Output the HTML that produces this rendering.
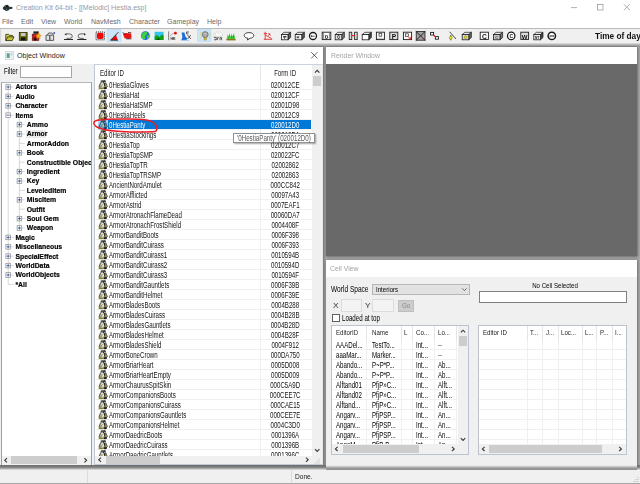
<!DOCTYPE html><html><head><meta charset="utf-8"><title>Creation Kit 64-bit - [[Melodic] Hestia.esp]</title><style>
*{box-sizing:border-box;margin:0;padding:0}
html,body{width:640px;height:484px;overflow:hidden;background:#ababab;font-family:"Liberation Sans",sans-serif;}
body{position:relative}
#root{position:absolute;left:0;top:0;width:640px;height:484px;filter:blur(0.3px)}
.a{position:absolute}
.t{position:absolute;white-space:nowrap;overflow:visible}
svg{position:absolute;overflow:visible}
.lv .t{-webkit-text-stroke:0}
</style></head><body><div id="root">
<div class="a" style="left:0;top:0;width:640px;height:28.3px;background:#fff"></div>
<svg style="left:0;top:0" width="16" height="14" viewBox="0 0 16 14"><path d="M2.9 7 L4.2 6.4 L5 5.2 L7.2 4.8 L8.6 5.6 L9.2 6.8 L12.4 7 L12.4 8.8 L9.4 9.2 L8.4 10.4 L6 10.9 L4.6 10 L3 9.2 Z" fill="#2b3337"/><path d="M4.6 6.8 L5.6 5.8 L6 6.6 Z M6.2 9 L7 9 L6.8 10.2 L6.2 10 Z" fill="#5f8890"/><ellipse cx="7" cy="6.4" rx="1" ry="0.6" fill="#0c0c0c"/></svg>
<div class="t" style="left:15.60px;top:2.50px;height:10px;line-height:10px;font-size:7.5px;color:#9a9aa0;transform:scale(0.943,1);transform-origin:0 50%;">Creation Kit 64-bit - [[Melodic] Hestia.esp]</div>
<svg style="left:565px;top:0" width="75" height="14" viewBox="0 0 75 14"><g stroke="#8f8f8f" stroke-width="0.7" fill="none"><path d="M6 7.6 H12"/><rect x="32.4" y="4.4" width="5.6" height="5.6"/><path d="M58.8 4.2 L64.8 10.2 M64.8 4.2 L58.8 10.2"/></g></svg>
<div class="t" style="left:2.40px;top:17.40px;height:10px;line-height:10px;font-size:7.4px;color:#6a6a6a;transform:scale(0.953,1);transform-origin:0 50%;">File</div>
<div class="t" style="left:21.20px;top:17.40px;height:10px;line-height:10px;font-size:7.4px;color:#6a6a6a;transform:scale(0.953,1);transform-origin:0 50%;">Edit</div>
<div class="t" style="left:41.00px;top:17.40px;height:10px;line-height:10px;font-size:7.4px;color:#6a6a6a;transform:scale(0.953,1);transform-origin:0 50%;">View</div>
<div class="t" style="left:64.30px;top:17.40px;height:10px;line-height:10px;font-size:7.4px;color:#6a6a6a;transform:scale(0.953,1);transform-origin:0 50%;">World</div>
<div class="t" style="left:91.20px;top:17.40px;height:10px;line-height:10px;font-size:7.4px;color:#6a6a6a;transform:scale(0.953,1);transform-origin:0 50%;">NavMesh</div>
<div class="t" style="left:128.80px;top:17.40px;height:10px;line-height:10px;font-size:7.4px;color:#6a6a6a;transform:scale(0.953,1);transform-origin:0 50%;">Character</div>
<div class="t" style="left:166.80px;top:17.40px;height:10px;line-height:10px;font-size:7.4px;color:#6a6a6a;transform:scale(0.953,1);transform-origin:0 50%;">Gameplay</div>
<div class="t" style="left:206.80px;top:17.40px;height:10px;line-height:10px;font-size:7.4px;color:#6a6a6a;transform:scale(0.953,1);transform-origin:0 50%;">Help</div>
<div class="a" style="left:0;top:28.3px;width:640px;height:15px;background:#f0f0f0;border-top:0.8px solid #b9b9b9"></div>
<div class="a" style="left:0;top:43.2px;width:640px;height:3.6px;background:linear-gradient(#e2e2e2,#b2b2b2 45%,#909090)"></div>
<svg style="left:0;top:28px;will-change:transform" width="640" height="16" viewBox="0 28 640 16" font-family="Liberation Sans, sans-serif" font-weight="bold">
<rect x="107" y="29.2" width="14" height="12.4" fill="#cce4f7" stroke="#a8d0f0" stroke-width="0.4"/>
<rect x="197.4" y="29" width="13.6" height="12.6" fill="#cce4f7" stroke="#a8d0f0" stroke-width="0.4"/>
<rect x="0" y="29" width="1.2" height="14" fill="#d8d8d8"/>
<path d="M5.8 40.6 V34.4 H8.6 L9.4 35.4 H12.4 V36.6" fill="#d8d86a" stroke="#2e2e00" stroke-width="0.85"/><path d="M5.8 40.6 L7.6 36.8 H14 L12.2 40.6 Z" fill="#c4c43c" stroke="#2e2e00" stroke-width="0.85"/>
<rect x="19.3" y="32.5" width="7.8" height="7.8" fill="#6e6e12" stroke="#2e2e00" stroke-width="0.8"/><rect x="20.9" y="33" width="4.6" height="3" fill="#c8c8c8"/><rect x="20.9" y="37.4" width="4.6" height="2.9" fill="#111"/>
<rect x="32.2" y="34.2" width="6.6" height="6.2" fill="#d41c1c" stroke="#5a0a0a" stroke-width="0.6"/><rect x="33.4" y="31.4" width="5.4" height="2.4" fill="#222"/><rect x="33.8" y="37.6" width="3" height="2.8" fill="#2a0a0a"/><path d="M38.6 32.6 L39.6 34.8 L41.4 35.4 L39.8 36.8 L40 39 L38.2 37.8 L36.4 38.6 L37 36.6 L35.8 35 L37.8 34.8 Z" fill="#f4b41c" stroke="#e46a10" stroke-width="0.4"/>
<path d="M46 35.2 H53.6 V40.4 H46 Z" fill="#e4e4e4" stroke="#4c4c4c" stroke-width="0.9"/><path d="M47.4 35 L48.6 33 H52 L53.4 35" fill="none" stroke="#4c4c4c" stroke-width="0.9"/><path d="M49.8 35.4 V40.2" stroke="#4c4c4c" stroke-width="1.2"/><rect x="53.6" y="32" width="1.2" height="2" fill="#2c3cc0"/>
<g fill="none" stroke="#4a4a4a" stroke-width="0.85"><path d="M66 33.9 H69.4 A2.9 2.25 0 0 1 69.4 38.4 H66.6"/><path d="M84.4 33.9 H81 A2.9 2.25 0 0 0 81 38.4 H83.8"/></g>
<path d="M64.4 34.6 L66.4 33 V35.6 Z M86 34.6 L84 33 V35.6 Z" fill="#333"/>
<path d="M64 39.5 H73 M77.2 39.5 H86.4" stroke="#1c1c1c" stroke-width="0.95"/>
<rect x="96" y="32" width="8.4" height="7.8" fill="none" stroke="#1c1c1c" stroke-width="0.9" stroke-dasharray="1.1 0.9"/><rect x="96.9" y="32.7" width="6.6" height="6.4" rx="1.8" fill="#f00808"/>
<path d="M111 40 L117.6 40 L116 34.8 Z" fill="#f00808"/><path d="M110.6 40.2 L118.4 32.2 M110.6 40.2 H118" stroke="#1c1c1c" stroke-width="0.9" fill="none"/>
<path d="M123 34 L126 33 L131 33.4 L131.6 37.4 L129 38.8 L124.6 38.2 Z" fill="#e81414"/><path d="M122.6 32.6 L125.6 34.4 M128 32.4 L131.4 33 M126 38.8 H131.6" stroke="#401010" stroke-width="0.8" fill="none"/>
<circle cx="145.4" cy="35.7" r="4.4" fill="#2468dc"/><path d="M141.6 34 L144 32 L146.8 31.8 L147.2 34.2 L145 36 L145.4 38.8 L143.4 39.4 L141.4 37.4 Z M146.8 35.8 L149.4 34.6 L149.4 37.6 L147.2 39.2 Z" fill="#3cd040"/>
<rect x="154.6" y="31.8" width="9" height="8.2" fill="#36c4ec"/><path d="M154.6 36.4 L157 35 L159.4 37 L162 34.6 L163.6 35.4 V40 H154.6 Z" fill="#12a018"/><path d="M156 40 L158.4 37.6 L160.4 40 Z" fill="#0a5a0e"/>
<path d="M168.6 31.4 V40.2" stroke="#666" stroke-width="0.8"/><path d="M170 36.4 Q171.4 33.2 174.2 33.4" stroke="#888" stroke-width="0.6" fill="none"/><circle cx="175.4" cy="33.2" r="1.4" fill="#e01010"/>
<text x="170.4" y="40" font-size="3.6" fill="#222">HK</text>
<path d="M181.6 32.4 H184.4 L185.4 36.6 L187.4 38.6 L186.4 40 H181.4 L182.4 37 Z" fill="#1c6cd4"/><path d="M181 40.4 H189" stroke="#9cc4ec" stroke-width="0.9"/><path d="M186.4 32 H189 M186.6 32 V34 H188.4 M187.6 35 L190.8 39 M190.8 35 L187.6 39" stroke="#222" stroke-width="0.7" fill="none"/>
<path d="M200 32.2 L201.6 33.4 M199.6 35 H201.2 M200 38 L201.6 36.8 M210.4 32.2 L208.8 33.4 M210.8 35 H209.2 M210.4 38 L208.8 36.8" stroke="#e4d020" stroke-width="0.7"/><circle cx="205.2" cy="34.6" r="3" fill="#a4a4a4" stroke="#5c5c5c" stroke-width="0.6"/><path d="M203.4 33.4 H207 M205.2 33.4 V36.6" stroke="#d4d4d4" stroke-width="0.6"/><rect x="204.1" y="37.6" width="2.2" height="2.4" fill="#d8c428" stroke="#6a5c00" stroke-width="0.35"/>
<path d="M213.6 36 Q213 33 215.6 33 Q216.4 31.4 218.4 32.4 Q220.4 31.2 221.4 33 Q222.8 33.6 222 36 Z" fill="#fff" stroke="#c4c4c4" stroke-width="0.5"/><path d="M214.6 33.6 L216 34.6 M218 33 L219.4 34.2" stroke="#aaa" stroke-width="0.5"/><path d="M213.8 37.4 H216.2 V40 M214 39.8 H216 M217.4 40.2 V37.6 H218.8 M220 40.2 V37.6 H221.6 V40.2" stroke="#222" stroke-width="0.7" fill="none"/>
<rect x="226.4" y="38.6" width="9.2" height="1.8" fill="#8a7418"/><path d="M227 38.8 L227.6 34 L228.6 37 L229.4 33 L230.6 36.8 L231.6 33.4 L232.6 37 L233.8 33 L235 38.8 Z" fill="#34d434"/><path d="M228.6 38.6 L229.4 35.6 M231.6 38.6 L232.2 35.8 M233.6 38.6 L234 35.4" stroke="#0c6c10" stroke-width="0.5"/>
<path d="M249 32.6 C252.2 32.6 253.8 34 253.8 35.4 C253.8 36.8 252.4 38 250.2 38.2 L247.4 40 L248 38.2 C245.6 38 244.2 36.8 244.2 35.4 C244.2 34 246 32.6 249 32.6 Z" fill="#fff" stroke="#1c1c1c" stroke-width="0.8"/>
<path d="M265.2 31.8 V39.4 M263.8 39.3 H272.2 M263.8 33.6 H267 M265.4 35 L271.6 38.6 M268.4 33 L270.6 35.6 M270 33.4 L268.4 35.6" stroke="#e01818" stroke-width="0.8" fill="none"/>
<path d="M281.4 34.599999999999994 L284.0 32.3 H290.59999999999997 L288.0 34.599999999999994 Z" fill="#e8e8e8" stroke="#1c1c1c" stroke-width="0.7"/><path d="M288.0 34.599999999999994 L290.59999999999997 32.3 V37.5 L288.0 39.8 Z" fill="#5a5a5a" stroke="#1c1c1c" stroke-width="0.7"/><rect x="281.4" y="34.599999999999994" width="6.6" height="5.2" fill="#f4f4f4" stroke="#1c1c1c" stroke-width="0.8"/><rect x="283" y="36.2" width="3.4" height="1.2" fill="#1c1c1c"/><path d="M284.6 37.4 V39" stroke="#1c1c1c" stroke-width="0.7"/>
<path d="M295.2 34.599999999999994 L297.8 32.3 H304.4 L301.8 34.599999999999994 Z" fill="#e8e8e8" stroke="#1c1c1c" stroke-width="0.7"/><path d="M301.8 34.599999999999994 L304.4 32.3 V37.5 L301.8 39.8 Z" fill="#5a5a5a" stroke="#1c1c1c" stroke-width="0.7"/><rect x="295.2" y="34.599999999999994" width="6.6" height="5.2" fill="#f4f4f4" stroke="#1c1c1c" stroke-width="0.8"/><rect x="296.6" y="36.4" width="2.6" height="1.8" fill="#555"/>
<circle cx="313" cy="36" r="3.5" fill="#fff" stroke="#1c1c1c" stroke-width="1.3"/><path d="M311.2 36.2 H314.8 M311.6 35 V37.2" stroke="#1c1c1c" stroke-width="0.7"/>
<rect x="322.2" y="32.2" width="8.6" height="7.4" fill="#fff" stroke="#1c1c1c" stroke-width="0.9"/><path d="M323.6 32.4 V39.4 M329.4 32.4 V39.4" stroke="#666" stroke-width="0.8"/><text x="326.5" y="38.5" font-size="6" fill="#111" text-anchor="middle">0</text>
<path d="M335.2 34.599999999999994 L337.8 32.3 H344.4 L341.8 34.599999999999994 Z" fill="#e8e8e8" stroke="#1c1c1c" stroke-width="0.7"/><path d="M341.8 34.599999999999994 L344.4 32.3 V37.5 L341.8 39.8 Z" fill="#777" stroke="#1c1c1c" stroke-width="0.7"/><rect x="335.2" y="34.599999999999994" width="6.6" height="5.2" fill="#e0e0e0" stroke="#1c1c1c" stroke-width="0.8"/><text x="338.5" y="39.2" font-size="4.6" fill="#111" text-anchor="middle">0</text>
<rect x="349.2" y="32.2" width="2.6" height="7.4" fill="#d8d8d8" stroke="#1c1c1c" stroke-width="0.8"/><rect x="354.6" y="32.2" width="2.6" height="7.4" fill="#d8d8d8" stroke="#1c1c1c" stroke-width="0.8"/><path d="M351.4 35.6 H355" stroke="#f01010" stroke-width="1.1"/>
<path d="M362.2 34.599999999999994 L364.8 32.3 H371.4 L368.8 34.599999999999994 Z" fill="#e8e8e8" stroke="#1c1c1c" stroke-width="0.7"/><path d="M368.8 34.599999999999994 L371.4 32.3 V37.5 L368.8 39.8 Z" fill="#444" stroke="#1c1c1c" stroke-width="0.7"/><rect x="362.2" y="34.599999999999994" width="6.6" height="5.2" fill="#fff" stroke="#1c1c1c" stroke-width="0.8"/>
<rect x="376.4" y="32.2" width="8" height="7.4" fill="#fff" stroke="#1c1c1c" stroke-width="0.9"/><rect x="379" y="33.6" width="2.8" height="2.6" fill="#eee" stroke="#1c1c1c" stroke-width="0.6"/><path d="M377 38.4 H383.8" stroke="#999" stroke-width="0.6"/>
<rect x="389.8" y="32.2" width="8" height="7.4" fill="#ddd" stroke="#1c1c1c" stroke-width="0.9"/><text x="394" y="38.8" font-size="6.6" fill="#111" text-anchor="middle">P</text>
<rect x="403.4" y="32.2" width="8.2" height="7.4" fill="#fff" stroke="#1c1c1c" stroke-width="0.9"/><rect x="405.4" y="33.8" width="3" height="2.8" fill="#eee" stroke="#1c1c1c" stroke-width="0.6"/><path d="M408 36.6 L410.4 38.8 M410.6 37 V39 H408.6" stroke="#e01010" stroke-width="0.8" fill="none"/>
<rect x="416.2" y="31.6" width="8.8" height="8.6" fill="#a0a0a0" stroke="#1c1c1c" stroke-width="0.8"/><path d="M415.8 31.2 L425.4 40.6 M425.4 31.2 L415.8 40.6" stroke="#1c1c1c" stroke-width="0.9"/><path d="M422.6 38 L424.2 39.4" stroke="#e01010" stroke-width="1"/>
<rect x="430.6" y="32.4" width="3" height="2.6" fill="#fff" stroke="#1c1c1c" stroke-width="0.9"/><rect x="435.4" y="36.6" width="3" height="2.6" fill="#fff" stroke="#1c1c1c" stroke-width="0.9"/><path d="M433.4 35 L436 37.4" stroke="#e01010" stroke-width="1.1"/>
<path d="M449.6 31.8 L456 39 M450.8 35 V40.4" stroke="#1c1c1c" stroke-width="0.8"/><circle cx="450.8" cy="37.8" r="1.5" fill="#e4e410" stroke="#6a6a00" stroke-width="0.4"/>
<path d="M462.2 34.599999999999994 L464.8 32.3 H471.4 L468.8 34.599999999999994 Z" fill="#e8e8e8" stroke="#1c1c1c" stroke-width="0.7"/><path d="M468.8 34.599999999999994 L471.4 32.3 V37.5 L468.8 39.8 Z" fill="#666" stroke="#1c1c1c" stroke-width="0.7"/><rect x="462.2" y="34.599999999999994" width="6.6" height="5.2" fill="#ddd" stroke="#1c1c1c" stroke-width="0.8"/><circle cx="465.6" cy="37.2" r="1.4" fill="#e4e410" stroke="#5a5a00" stroke-width="0.4"/>
<rect x="480.2" y="32.2" width="8.2" height="7.2" fill="#fff" stroke="#1c1c1c" stroke-width="0.9"/><text x="484.4" y="38.7" font-size="6.6" fill="#111" text-anchor="middle">C</text>
<path d="M493.4 34.599999999999994 L496.0 32.3 H502.59999999999997 L500.0 34.599999999999994 Z" fill="#e8e8e8" stroke="#1c1c1c" stroke-width="0.7"/><path d="M500.0 34.599999999999994 L502.59999999999997 32.3 V37.5 L500.0 39.8 Z" fill="#777" stroke="#1c1c1c" stroke-width="0.7"/><rect x="493.4" y="34.599999999999994" width="6.6" height="5.2" fill="#c8c8c8" stroke="#1c1c1c" stroke-width="0.8"/><text x="496.7" y="39.2" font-size="4.2" fill="#444" text-anchor="middle">C</text>
<circle cx="511.2" cy="35.9" r="3.7" fill="#fff" stroke="#1c1c1c" stroke-width="1.25"/><text x="511.2" y="37.7" font-size="5" fill="#111" text-anchor="middle">C</text>
<rect x="520.8" y="32.2" width="7.8" height="7.2" fill="#ddd" stroke="#1c1c1c" stroke-width="0.9"/><text x="524.7" y="38.6" font-size="6" fill="#111" text-anchor="middle">W</text>
<path d="M533.8 34.599999999999994 L536.4 32.3 H543.0 L540.4 34.599999999999994 Z" fill="#e8e8e8" stroke="#1c1c1c" stroke-width="0.7"/><path d="M540.4 34.599999999999994 L543.0 32.3 V37.5 L540.4 39.8 Z" fill="#444" stroke="#1c1c1c" stroke-width="0.7"/><rect x="533.8" y="34.599999999999994" width="6.6" height="5.2" fill="#eee" stroke="#1c1c1c" stroke-width="0.8"/><text x="537.1" y="39.2" font-size="3.2" fill="#111" text-anchor="middle">NT</text>
<circle cx="551.8" cy="35.9" r="3.7" fill="#fff" stroke="#1c1c1c" stroke-width="1.5"/><text x="551.8" y="37.1" font-size="3.4" fill="#111" text-anchor="middle">pw</text>
</svg>
<div class="t" style="left:595.30px;top:31.40px;height:10px;line-height:10px;font-size:8.3px;color:#111;font-weight:bold;transform:scale(0.997,1);transform-origin:0 50%;">Time of day</div>
<!--BAND-->
<div class="a" style="left:0;top:469.6px;width:640px;height:14.4px;background:#f0f0f0;border-bottom:1px solid #a6a6a6"></div>
<div class="a" style="left:86.6px;top:470px;width:0.6px;height:12.5px;background:#dcdcdc"></div>
<div class="a" style="left:291.4px;top:470px;width:0.6px;height:12.5px;background:#dcdcdc"></div>
<div class="t" style="left:295.00px;top:472.00px;height:10px;line-height:10px;font-size:6.6px;color:#222;transform:scale(0.997,1);transform-origin:0 50%;">Done.</div>
<svg style="left:632px;top:476px" width="8" height="8" viewBox="0 0 8 8"><g fill="#b8b8b8"><rect x="5.6" y="1" width="1" height="1"/><rect x="5.6" y="3" width="1" height="1"/><rect x="5.6" y="5" width="1" height="1"/><rect x="3.6" y="3" width="1" height="1"/><rect x="3.6" y="5" width="1" height="1"/><rect x="1.6" y="5" width="1" height="1"/></g></svg>
<div class="a" style="left:325.8px;top:46.8px;width:311px;height:208.8px;background:#696969;box-shadow:0 0 2.5px 0.5px rgba(0,0,0,.38)"><div class="a" style="left:0;top:0;width:311px;height:17.4px;background:#fff"></div></div>
<div class="t" style="left:330.60px;top:50.60px;height:10px;line-height:10px;font-size:6.9px;color:#a3a3a3;transform:scale(0.997,1);transform-origin:0 50%;">Render Window</div>
<div class="a" style="left:325.8px;top:259.7px;width:311px;height:206.3px;background:#f0f0f0;box-shadow:0 0 2.5px 0.5px rgba(0,0,0,.38)"><div class="a" style="left:0;top:0;width:311px;height:17.6px;background:#fff"></div></div>
<div class="t" style="left:330.40px;top:263.60px;height:10px;line-height:10px;font-size:6.9px;color:#a3a3a3;transform:scale(0.997,1);transform-origin:0 50%;">Cell View</div>
<div class="t" style="left:331.30px;top:284.30px;height:10px;line-height:10px;font-size:8.4px;color:#000;transform:scale(0.785,1);transform-origin:0 50%;">World Space</div>
<div class="a" style="left:372.2px;top:283.6px;width:97.8px;height:11.8px;background:#e2e2e2;border:0.7px solid #b6b6b6"></div>
<div class="t" style="left:376.00px;top:284.90px;height:10px;line-height:10px;font-size:7.4px;color:#000;transform:scale(0.83,1);transform-origin:0 50%;">Interiors</div>
<svg style="left:460px;top:285px" width="9" height="9" viewBox="0 0 9 9"><path d="M2.2 3.4 L4.4 5.6 L6.6 3.4" stroke="#444" stroke-width="0.75" fill="none"/></svg>
<div class="t" style="left:333.10px;top:300.90px;height:10px;line-height:10px;font-size:7.8px;color:#333;transform:scale(1.08,1);transform-origin:0 50%;">X</div>
<div class="a" style="left:341px;top:298.6px;width:21.2px;height:13.4px;background:#f3f3f3;border:0.7px solid #dcdcdc"></div>
<div class="t" style="left:365.30px;top:300.90px;height:10px;line-height:10px;font-size:7.8px;color:#333;transform:scale(1.08,1);transform-origin:0 50%;">Y</div>
<div class="a" style="left:372.4px;top:298.6px;width:21.2px;height:13.4px;background:#f3f3f3;border:0.7px solid #dcdcdc"></div>
<div class="a" style="left:398px;top:300px;width:16.2px;height:11.6px;background:#cccccc;border:0.7px solid #bfbfbf"></div>
<div class="t" style="left:398.00px;top:300.80px;height:10px;line-height:10px;font-size:7.4px;color:#8a8a8a;width:16.20px;text-align:center;transform:scale(0.83,1);transform-origin:50% 50%;">Go</div>
<div class="a" style="left:332.2px;top:314.2px;width:7.6px;height:7.6px;background:#fff;border:0.65px solid #606060"></div>
<div class="t" style="left:342.00px;top:313.30px;height:10px;line-height:10px;font-size:8.4px;color:#000;transform:scale(0.74,1);transform-origin:0 50%;">Loaded at top</div>
<div class="t" style="left:480.60px;top:280.60px;height:10px;line-height:10px;font-size:7.4px;color:#000;width:148.00px;text-align:center;transform:scale(0.83,1);transform-origin:50% 50%;">No Cell Selected</div>
<div class="a" style="left:479px;top:291px;width:148px;height:12px;background:#fff;border:0.8px solid #808080"></div>
<div class="a" style="left:331px;top:325px;width:138.0px;height:130.0px;background:#fff;border:1px solid #bcc3cc"></div>
<div class="a" style="left:332px;top:326px;width:126.0px;height:118.0px;overflow:hidden">
<div class="a" style="left:34.0px;top:0;width:0.7px;height:14.6px;background:#e5e5e5"></div>
<div class="a" style="left:34.0px;top:14.6px;width:0.7px;height:120px;background:#f0f0f0"></div>
<div class="a" style="left:68.6px;top:0;width:0.7px;height:14.6px;background:#e5e5e5"></div>
<div class="a" style="left:68.6px;top:14.6px;width:0.7px;height:120px;background:#f0f0f0"></div>
<div class="a" style="left:80.4px;top:0;width:0.7px;height:14.6px;background:#e5e5e5"></div>
<div class="a" style="left:80.4px;top:14.6px;width:0.7px;height:120px;background:#f0f0f0"></div>
<div class="a" style="left:102.4px;top:0;width:0.7px;height:14.6px;background:#e5e5e5"></div>
<div class="a" style="left:102.4px;top:14.6px;width:0.7px;height:120px;background:#f0f0f0"></div>
<div class="a" style="left:123.6px;top:0;width:0.7px;height:14.6px;background:#e5e5e5"></div>
<div class="a" style="left:123.6px;top:14.6px;width:0.7px;height:120px;background:#f0f0f0"></div>
<div class="t" style="left:4.00px;top:1.90px;height:10px;line-height:10px;font-size:7.4px;color:#222;transform:scale(0.83,1);transform-origin:0 50%;">EditorID</div>
<div class="t" style="left:39.60px;top:1.90px;height:10px;line-height:10px;font-size:7.4px;color:#222;transform:scale(0.83,1);transform-origin:0 50%;">Name</div>
<div class="t" style="left:72.20px;top:1.90px;height:10px;line-height:10px;font-size:7.4px;color:#222;transform:scale(0.83,1);transform-origin:0 50%;">L</div>
<div class="t" style="left:84.20px;top:1.90px;height:10px;line-height:10px;font-size:7.4px;color:#222;transform:scale(0.83,1);transform-origin:0 50%;">Co...</div>
<div class="t" style="left:106.00px;top:1.90px;height:10px;line-height:10px;font-size:7.4px;color:#222;transform:scale(0.83,1);transform-origin:0 50%;">Lo...</div>
<div class="a" style="left:0;top:23.15px;width:126.0px;height:0.7px;background:#f0f0f0"></div>
<div class="t" style="left:4.00px;top:14.30px;height:10px;line-height:10px;font-size:8.4px;color:#000;transform:scale(0.731,1);transform-origin:0 50%;">AAADel...</div>
<div class="t" style="left:39.60px;top:14.30px;height:10px;line-height:10px;font-size:8.4px;color:#000;transform:scale(0.731,1);transform-origin:0 50%;">TestTo...</div>
<div class="t" style="left:84.20px;top:14.30px;height:10px;line-height:10px;font-size:8.4px;color:#000;transform:scale(0.731,1);transform-origin:0 50%;">Int...</div>
<div class="t" style="left:106.00px;top:14.30px;height:10px;line-height:10px;font-size:8.4px;color:#000;transform:scale(0.731,1);transform-origin:0 50%;">--</div>
<div class="a" style="left:0;top:33.15px;width:126.0px;height:0.7px;background:#f0f0f0"></div>
<div class="t" style="left:4.00px;top:24.30px;height:10px;line-height:10px;font-size:8.4px;color:#000;transform:scale(0.731,1);transform-origin:0 50%;">aaaMar...</div>
<div class="t" style="left:39.60px;top:24.30px;height:10px;line-height:10px;font-size:8.4px;color:#000;transform:scale(0.731,1);transform-origin:0 50%;">Marker...</div>
<div class="t" style="left:84.20px;top:24.30px;height:10px;line-height:10px;font-size:8.4px;color:#000;transform:scale(0.731,1);transform-origin:0 50%;">Int...</div>
<div class="t" style="left:106.00px;top:24.30px;height:10px;line-height:10px;font-size:8.4px;color:#000;transform:scale(0.731,1);transform-origin:0 50%;">--</div>
<div class="a" style="left:0;top:43.15px;width:126.0px;height:0.7px;background:#f0f0f0"></div>
<div class="t" style="left:4.00px;top:34.30px;height:10px;line-height:10px;font-size:8.4px;color:#000;transform:scale(0.731,1);transform-origin:0 50%;">Abando...</div>
<div class="t" style="left:39.60px;top:34.30px;height:10px;line-height:10px;font-size:8.4px;color:#000;transform:scale(0.731,1);transform-origin:0 50%;">P~P*P...</div>
<div class="t" style="left:84.20px;top:34.30px;height:10px;line-height:10px;font-size:8.4px;color:#000;transform:scale(0.731,1);transform-origin:0 50%;">Int...</div>
<div class="t" style="left:106.00px;top:34.30px;height:10px;line-height:10px;font-size:8.4px;color:#000;transform:scale(0.731,1);transform-origin:0 50%;">Ab...</div>
<div class="a" style="left:0;top:53.15px;width:126.0px;height:0.7px;background:#f0f0f0"></div>
<div class="t" style="left:4.00px;top:44.30px;height:10px;line-height:10px;font-size:8.4px;color:#000;transform:scale(0.731,1);transform-origin:0 50%;">Abando...</div>
<div class="t" style="left:39.60px;top:44.30px;height:10px;line-height:10px;font-size:8.4px;color:#000;transform:scale(0.731,1);transform-origin:0 50%;">P~P*P...</div>
<div class="t" style="left:84.20px;top:44.30px;height:10px;line-height:10px;font-size:8.4px;color:#000;transform:scale(0.731,1);transform-origin:0 50%;">Int...</div>
<div class="t" style="left:106.00px;top:44.30px;height:10px;line-height:10px;font-size:8.4px;color:#000;transform:scale(0.731,1);transform-origin:0 50%;">Ab...</div>
<div class="a" style="left:0;top:63.15px;width:126.0px;height:0.7px;background:#f0f0f0"></div>
<div class="t" style="left:4.00px;top:54.30px;height:10px;line-height:10px;font-size:8.4px;color:#000;transform:scale(0.731,1);transform-origin:0 50%;">Alftand01</div>
<div class="t" style="left:39.60px;top:54.30px;height:10px;line-height:10px;font-size:8.4px;color:#000;transform:scale(0.731,1);transform-origin:0 50%;">PfjP»C...</div>
<div class="t" style="left:84.20px;top:54.30px;height:10px;line-height:10px;font-size:8.4px;color:#000;transform:scale(0.731,1);transform-origin:0 50%;">Int...</div>
<div class="t" style="left:106.00px;top:54.30px;height:10px;line-height:10px;font-size:8.4px;color:#000;transform:scale(0.731,1);transform-origin:0 50%;">Alft...</div>
<div class="a" style="left:0;top:73.15px;width:126.0px;height:0.7px;background:#f0f0f0"></div>
<div class="t" style="left:4.00px;top:64.30px;height:10px;line-height:10px;font-size:8.4px;color:#000;transform:scale(0.731,1);transform-origin:0 50%;">Alftand02</div>
<div class="t" style="left:39.60px;top:64.30px;height:10px;line-height:10px;font-size:8.4px;color:#000;transform:scale(0.731,1);transform-origin:0 50%;">PfjP»C...</div>
<div class="t" style="left:84.20px;top:64.30px;height:10px;line-height:10px;font-size:8.4px;color:#000;transform:scale(0.731,1);transform-origin:0 50%;">Int...</div>
<div class="t" style="left:106.00px;top:64.30px;height:10px;line-height:10px;font-size:8.4px;color:#000;transform:scale(0.731,1);transform-origin:0 50%;">Alft...</div>
<div class="a" style="left:0;top:83.15px;width:126.0px;height:0.7px;background:#f0f0f0"></div>
<div class="t" style="left:4.00px;top:74.30px;height:10px;line-height:10px;font-size:8.4px;color:#000;transform:scale(0.731,1);transform-origin:0 50%;">Alftand...</div>
<div class="t" style="left:39.60px;top:74.30px;height:10px;line-height:10px;font-size:8.4px;color:#000;transform:scale(0.731,1);transform-origin:0 50%;">PfjP»C...</div>
<div class="t" style="left:84.20px;top:74.30px;height:10px;line-height:10px;font-size:8.4px;color:#000;transform:scale(0.731,1);transform-origin:0 50%;">Int...</div>
<div class="t" style="left:106.00px;top:74.30px;height:10px;line-height:10px;font-size:8.4px;color:#000;transform:scale(0.731,1);transform-origin:0 50%;">Alft...</div>
<div class="a" style="left:0;top:93.15px;width:126.0px;height:0.7px;background:#f0f0f0"></div>
<div class="t" style="left:4.00px;top:84.30px;height:10px;line-height:10px;font-size:8.4px;color:#000;transform:scale(0.731,1);transform-origin:0 50%;">Angarv...</div>
<div class="t" style="left:39.60px;top:84.30px;height:10px;line-height:10px;font-size:8.4px;color:#000;transform:scale(0.731,1);transform-origin:0 50%;">PfjPSP...</div>
<div class="t" style="left:84.20px;top:84.30px;height:10px;line-height:10px;font-size:8.4px;color:#000;transform:scale(0.731,1);transform-origin:0 50%;">Int...</div>
<div class="t" style="left:106.00px;top:84.30px;height:10px;line-height:10px;font-size:8.4px;color:#000;transform:scale(0.731,1);transform-origin:0 50%;">An...</div>
<div class="a" style="left:0;top:103.15px;width:126.0px;height:0.7px;background:#f0f0f0"></div>
<div class="t" style="left:4.00px;top:94.30px;height:10px;line-height:10px;font-size:8.4px;color:#000;transform:scale(0.731,1);transform-origin:0 50%;">Angarv...</div>
<div class="t" style="left:39.60px;top:94.30px;height:10px;line-height:10px;font-size:8.4px;color:#000;transform:scale(0.731,1);transform-origin:0 50%;">PfjPSP...</div>
<div class="t" style="left:84.20px;top:94.30px;height:10px;line-height:10px;font-size:8.4px;color:#000;transform:scale(0.731,1);transform-origin:0 50%;">Int...</div>
<div class="t" style="left:106.00px;top:94.30px;height:10px;line-height:10px;font-size:8.4px;color:#000;transform:scale(0.731,1);transform-origin:0 50%;">An...</div>
<div class="a" style="left:0;top:113.15px;width:126.0px;height:0.7px;background:#f0f0f0"></div>
<div class="t" style="left:4.00px;top:104.30px;height:10px;line-height:10px;font-size:8.4px;color:#000;transform:scale(0.731,1);transform-origin:0 50%;">Angarv...</div>
<div class="t" style="left:39.60px;top:104.30px;height:10px;line-height:10px;font-size:8.4px;color:#000;transform:scale(0.731,1);transform-origin:0 50%;">PfjPSP...</div>
<div class="t" style="left:84.20px;top:104.30px;height:10px;line-height:10px;font-size:8.4px;color:#000;transform:scale(0.731,1);transform-origin:0 50%;">Int...</div>
<div class="t" style="left:106.00px;top:104.30px;height:10px;line-height:10px;font-size:8.4px;color:#000;transform:scale(0.731,1);transform-origin:0 50%;">An...</div>
<div class="a" style="left:0;top:123.15px;width:126.0px;height:0.7px;background:#f0f0f0"></div>
<div class="t" style="left:4.00px;top:114.30px;height:10px;line-height:10px;font-size:8.4px;color:#000;transform:scale(0.731,1);transform-origin:0 50%;">AngaM...</div>
<div class="t" style="left:39.60px;top:114.30px;height:10px;line-height:10px;font-size:8.4px;color:#000;transform:scale(0.731,1);transform-origin:0 50%;">PfjP·B...</div>
<div class="t" style="left:84.20px;top:114.30px;height:10px;line-height:10px;font-size:8.4px;color:#000;transform:scale(0.731,1);transform-origin:0 50%;">Int...</div>
<div class="t" style="left:106.00px;top:114.30px;height:10px;line-height:10px;font-size:8.4px;color:#000;transform:scale(0.731,1);transform-origin:0 50%;">An...</div>
</div>
<div class="a" style="left:458px;top:326px;width:10.0px;height:118.0px;background:#f0f0f0"></div>
<div class="a" style="left:459px;top:336px;width:8px;height:10px;background:#cdcdcd"></div>
<svg style="left:458px;top:325px" width="10" height="120" viewBox="0 0 10 120"><g stroke="#3a3a3a" stroke-width="1.15" fill="none"><path d="M2.8 7.4 L5 5.2 L7.2 7.4"/><path d="M2.8 113.2 L5 115.4 L7.2 113.2"/></g></svg>
<div class="a" style="left:332px;top:444px;width:136.0px;height:10px;background:#f0f0f0"></div>
<div class="a" style="left:343px;top:445px;width:76px;height:8px;background:#cdcdcd"></div>
<svg style="left:331px;top:444px" width="140" height="10" viewBox="0 0 140 10"><g stroke="#3a3a3a" stroke-width="1.15" fill="none"><path d="M6.6 2.8 L4.4 4.9 L6.6 7"/><path d="M121 2.8 L123.2 4.9 L121 7"/></g></svg>
<div class="a" style="left:478px;top:325px;width:149.0px;height:130.0px;background:#fff;border:1px solid #bcc3cc"></div>
<div class="a" style="left:479px;top:326px;width:147.0px;height:118.0px;overflow:hidden">
<div class="a" style="left:48.0px;top:0;width:0.7px;height:14.6px;background:#e5e5e5"></div>
<div class="a" style="left:48.0px;top:14.6px;width:0.7px;height:120px;background:#f0f0f0"></div>
<div class="a" style="left:63.4px;top:0;width:0.7px;height:14.6px;background:#e5e5e5"></div>
<div class="a" style="left:63.4px;top:14.6px;width:0.7px;height:120px;background:#f0f0f0"></div>
<div class="a" style="left:78.9px;top:0;width:0.7px;height:14.6px;background:#e5e5e5"></div>
<div class="a" style="left:78.9px;top:14.6px;width:0.7px;height:120px;background:#f0f0f0"></div>
<div class="a" style="left:102.5px;top:0;width:0.7px;height:14.6px;background:#e5e5e5"></div>
<div class="a" style="left:102.5px;top:14.6px;width:0.7px;height:120px;background:#f0f0f0"></div>
<div class="a" style="left:117.4px;top:0;width:0.7px;height:14.6px;background:#e5e5e5"></div>
<div class="a" style="left:117.4px;top:14.6px;width:0.7px;height:120px;background:#f0f0f0"></div>
<div class="a" style="left:132.9px;top:0;width:0.7px;height:14.6px;background:#e5e5e5"></div>
<div class="a" style="left:132.9px;top:14.6px;width:0.7px;height:120px;background:#f0f0f0"></div>
<div class="t" style="left:3.80px;top:1.90px;height:10px;line-height:10px;font-size:7.4px;color:#222;transform:scale(0.83,1);transform-origin:0 50%;">Editor ID</div>
<div class="t" style="left:51.40px;top:1.90px;height:10px;line-height:10px;font-size:7.4px;color:#222;transform:scale(0.83,1);transform-origin:0 50%;">T...</div>
<div class="t" style="left:66.80px;top:1.90px;height:10px;line-height:10px;font-size:7.4px;color:#222;transform:scale(0.83,1);transform-origin:0 50%;">J...</div>
<div class="t" style="left:82.40px;top:1.90px;height:10px;line-height:10px;font-size:7.4px;color:#222;transform:scale(0.83,1);transform-origin:0 50%;">Loc...</div>
<div class="t" style="left:105.60px;top:1.90px;height:10px;line-height:10px;font-size:7.4px;color:#222;transform:scale(0.83,1);transform-origin:0 50%;">L...</div>
<div class="t" style="left:120.60px;top:1.90px;height:10px;line-height:10px;font-size:7.4px;color:#222;transform:scale(0.83,1);transform-origin:0 50%;">P...</div>
<div class="t" style="left:136.20px;top:1.90px;height:10px;line-height:10px;font-size:7.4px;color:#222;transform:scale(0.83,1);transform-origin:0 50%;">I...</div>
<div class="a" style="left:0;top:23.15px;width:149.0px;height:0.7px;background:#f0f0f0"></div>
<div class="a" style="left:0;top:33.15px;width:149.0px;height:0.7px;background:#f0f0f0"></div>
<div class="a" style="left:0;top:43.15px;width:149.0px;height:0.7px;background:#f0f0f0"></div>
<div class="a" style="left:0;top:53.15px;width:149.0px;height:0.7px;background:#f0f0f0"></div>
<div class="a" style="left:0;top:63.15px;width:149.0px;height:0.7px;background:#f0f0f0"></div>
<div class="a" style="left:0;top:73.15px;width:149.0px;height:0.7px;background:#f0f0f0"></div>
<div class="a" style="left:0;top:83.15px;width:149.0px;height:0.7px;background:#f0f0f0"></div>
<div class="a" style="left:0;top:93.15px;width:149.0px;height:0.7px;background:#f0f0f0"></div>
<div class="a" style="left:0;top:103.15px;width:149.0px;height:0.7px;background:#f0f0f0"></div>
<div class="a" style="left:0;top:113.15px;width:149.0px;height:0.7px;background:#f0f0f0"></div>
<div class="a" style="left:0;top:123.15px;width:149.0px;height:0.7px;background:#f0f0f0"></div>
</div>
<div class="a" style="left:479px;top:444px;width:147.0px;height:10px;background:#f0f0f0"></div>
<div class="a" style="left:489px;top:445px;width:113px;height:8px;background:#cdcdcd"></div>
<svg style="left:478px;top:444px" width="150" height="10" viewBox="0 0 150 10"><g stroke="#3a3a3a" stroke-width="1.15" fill="none"><path d="M6.6 2.8 L4.4 4.9 L6.6 7"/><path d="M141.2 2.8 L143.4 4.9 L141.2 7"/></g></svg>
<div class="a" style="left:0;top:46.8px;width:323.3px;height:419.2px;background:#f0f0f0;box-shadow:0 0 2.5px 0.5px rgba(0,0,0,.4)"><div class="a" style="left:0;top:0;width:323.3px;height:17.6px;background:#fff"></div></div>
<svg style="left:4.6px;top:50.6px" width="9" height="9" viewBox="0 0 9 9"><rect x="0.3" y="0.3" width="8.4" height="8.2" fill="#eef1f3" stroke="#c4cad0" stroke-width="0.6"/><rect x="1.7" y="2.3" width="3" height="4.6" fill="#5da394"/><rect x="5.6" y="2.2" width="1.6" height="2.2" fill="#b4c8e4"/></svg>
<div class="t" style="left:17.00px;top:50.60px;height:10px;line-height:10px;font-size:7.15px;color:#1e1e1e;transform:scale(0.997,1);transform-origin:0 50%;">Object Window</div>
<svg style="left:310px;top:51px" width="9" height="9" viewBox="0 0 9 9"><path d="M1.2 1.2 L7.4 7.4 M7.4 1.2 L1.2 7.4" stroke="#333" stroke-width="0.75" fill="none"/></svg>
<div class="t" style="left:3.80px;top:66.30px;height:10px;line-height:10px;font-size:8.4px;color:#000;transform:scale(0.731,1);transform-origin:0 50%;">Filter</div>
<div class="a" style="left:20.4px;top:66px;width:51.2px;height:11.6px;background:#fff;border:0.7px solid #a6a6a6"></div>
<div class="a" style="left:0.8px;top:81.6px;width:90.8px;height:384.4px;background:#fff;border:0.8px solid #9aa0a8;border-top-color:#b4b9c0;border-bottom:none;overflow:hidden"></div>
<div class="a" style="left:25.6px;top:129.60px;width:20.6px;height:8.8px;background:#eaeaea"></div>
<svg style="left:0;top:0" width="95" height="470" viewBox="0 0 95 470">
<g stroke="#a8a8a8" stroke-width="0.6" fill="none" opacity="0.75">
<path d="M8.2 87.00 V284.40"/>
<path d="M19.4 118.20 V228.00"/>
<path d="M8.2 87.00 H13.6"/>
<path d="M8.2 96.40 H13.6"/>
<path d="M8.2 105.80 H13.6"/>
<path d="M8.2 115.20 H13.6"/>
<path d="M19.4 124.60 H24.799999999999997"/>
<path d="M19.4 134.00 H24.799999999999997"/>
<path d="M19.4 143.40 H24.799999999999997"/>
<path d="M19.4 152.80 H24.799999999999997"/>
<path d="M19.4 162.20 H24.799999999999997"/>
<path d="M19.4 171.60 H24.799999999999997"/>
<path d="M19.4 181.00 H24.799999999999997"/>
<path d="M19.4 190.40 H24.799999999999997"/>
<path d="M19.4 199.80 H24.799999999999997"/>
<path d="M19.4 209.20 H24.799999999999997"/>
<path d="M19.4 218.60 H24.799999999999997"/>
<path d="M19.4 228.00 H24.799999999999997"/>
<path d="M8.2 237.40 H13.6"/>
<path d="M8.2 246.80 H13.6"/>
<path d="M8.2 256.20 H13.6"/>
<path d="M8.2 265.60 H13.6"/>
<path d="M8.2 275.00 H13.6"/>
<path d="M8.2 284.40 H13.6"/>
</g>
<rect x="5.90" y="84.70" width="4.6" height="4.6" fill="#fff" stroke="#858585" stroke-width="0.7"/>
<path d="M6.70 87.00 H9.70 M8.2 85.50 V88.50" stroke="#2c4a9c" stroke-width="0.8" fill="none"/>
<rect x="5.90" y="94.10" width="4.6" height="4.6" fill="#fff" stroke="#858585" stroke-width="0.7"/>
<path d="M6.70 96.40 H9.70 M8.2 94.90 V97.90" stroke="#2c4a9c" stroke-width="0.8" fill="none"/>
<rect x="5.90" y="103.50" width="4.6" height="4.6" fill="#fff" stroke="#858585" stroke-width="0.7"/>
<path d="M6.70 105.80 H9.70 M8.2 104.30 V107.30" stroke="#2c4a9c" stroke-width="0.8" fill="none"/>
<rect x="5.90" y="112.90" width="4.6" height="4.6" fill="#fff" stroke="#858585" stroke-width="0.7"/>
<path d="M6.70 115.20 H9.70" stroke="#2c4a9c" stroke-width="0.8" fill="none"/>
<rect x="17.10" y="122.30" width="4.6" height="4.6" fill="#fff" stroke="#858585" stroke-width="0.7"/>
<path d="M17.90 124.60 H20.90 M19.4 123.10 V126.10" stroke="#2c4a9c" stroke-width="0.8" fill="none"/>
<rect x="17.10" y="131.70" width="4.6" height="4.6" fill="#fff" stroke="#858585" stroke-width="0.7"/>
<path d="M17.90 134.00 H20.90 M19.4 132.50 V135.50" stroke="#2c4a9c" stroke-width="0.8" fill="none"/>
<rect x="17.10" y="150.50" width="4.6" height="4.6" fill="#fff" stroke="#858585" stroke-width="0.7"/>
<path d="M17.90 152.80 H20.90 M19.4 151.30 V154.30" stroke="#2c4a9c" stroke-width="0.8" fill="none"/>
<rect x="17.10" y="169.30" width="4.6" height="4.6" fill="#fff" stroke="#858585" stroke-width="0.7"/>
<path d="M17.90 171.60 H20.90 M19.4 170.10 V173.10" stroke="#2c4a9c" stroke-width="0.8" fill="none"/>
<rect x="17.10" y="178.70" width="4.6" height="4.6" fill="#fff" stroke="#858585" stroke-width="0.7"/>
<path d="M17.90 181.00 H20.90 M19.4 179.50 V182.50" stroke="#2c4a9c" stroke-width="0.8" fill="none"/>
<rect x="17.10" y="197.50" width="4.6" height="4.6" fill="#fff" stroke="#858585" stroke-width="0.7"/>
<path d="M17.90 199.80 H20.90 M19.4 198.30 V201.30" stroke="#2c4a9c" stroke-width="0.8" fill="none"/>
<rect x="17.10" y="216.30" width="4.6" height="4.6" fill="#fff" stroke="#858585" stroke-width="0.7"/>
<path d="M17.90 218.60 H20.90 M19.4 217.10 V220.10" stroke="#2c4a9c" stroke-width="0.8" fill="none"/>
<rect x="17.10" y="225.70" width="4.6" height="4.6" fill="#fff" stroke="#858585" stroke-width="0.7"/>
<path d="M17.90 228.00 H20.90 M19.4 226.50 V229.50" stroke="#2c4a9c" stroke-width="0.8" fill="none"/>
<rect x="5.90" y="235.10" width="4.6" height="4.6" fill="#fff" stroke="#858585" stroke-width="0.7"/>
<path d="M6.70 237.40 H9.70 M8.2 235.90 V238.90" stroke="#2c4a9c" stroke-width="0.8" fill="none"/>
<rect x="5.90" y="244.50" width="4.6" height="4.6" fill="#fff" stroke="#858585" stroke-width="0.7"/>
<path d="M6.70 246.80 H9.70 M8.2 245.30 V248.30" stroke="#2c4a9c" stroke-width="0.8" fill="none"/>
<rect x="5.90" y="253.90" width="4.6" height="4.6" fill="#fff" stroke="#858585" stroke-width="0.7"/>
<path d="M6.70 256.20 H9.70 M8.2 254.70 V257.70" stroke="#2c4a9c" stroke-width="0.8" fill="none"/>
<rect x="5.90" y="263.30" width="4.6" height="4.6" fill="#fff" stroke="#858585" stroke-width="0.7"/>
<path d="M6.70 265.60 H9.70 M8.2 264.10 V267.10" stroke="#2c4a9c" stroke-width="0.8" fill="none"/>
<rect x="5.90" y="272.70" width="4.6" height="4.6" fill="#fff" stroke="#858585" stroke-width="0.7"/>
<path d="M6.70 275.00 H9.70 M8.2 273.50 V276.50" stroke="#2c4a9c" stroke-width="0.8" fill="none"/>
</svg>
<div class="t" style="left:15.40px;top:82.40px;height:9.4px;line-height:9.4px;font-size:6.85px;color:#000;font-weight:bold;transform:scale(1,1.08);transform-origin:0 50%;-webkit-text-stroke:0.18px #000;">Actors</div>
<div class="t" style="left:15.40px;top:91.80px;height:9.4px;line-height:9.4px;font-size:6.85px;color:#000;font-weight:bold;transform:scale(1,1.08);transform-origin:0 50%;-webkit-text-stroke:0.18px #000;">Audio</div>
<div class="t" style="left:15.40px;top:101.20px;height:9.4px;line-height:9.4px;font-size:6.85px;color:#000;font-weight:bold;transform:scale(1,1.08);transform-origin:0 50%;-webkit-text-stroke:0.18px #000;">Character</div>
<div class="t" style="left:15.40px;top:110.60px;height:9.4px;line-height:9.4px;font-size:6.85px;color:#000;font-weight:bold;transform:scale(1,1.08);transform-origin:0 50%;-webkit-text-stroke:0.18px #000;">Items</div>
<div class="t" style="left:26.80px;top:120.00px;height:9.4px;line-height:9.4px;font-size:6.85px;color:#000;font-weight:bold;transform:scale(1,1.08);transform-origin:0 50%;-webkit-text-stroke:0.18px #000;">Ammo</div>
<div class="t" style="left:26.80px;top:129.40px;height:9.4px;line-height:9.4px;font-size:6.85px;color:#000;font-weight:bold;transform:scale(1,1.08);transform-origin:0 50%;-webkit-text-stroke:0.18px #000;">Armor</div>
<div class="t" style="left:26.80px;top:138.80px;height:9.4px;line-height:9.4px;font-size:6.85px;color:#000;font-weight:bold;transform:scale(1,1.08);transform-origin:0 50%;-webkit-text-stroke:0.18px #000;">ArmorAddon</div>
<div class="t" style="left:26.80px;top:148.20px;height:9.4px;line-height:9.4px;font-size:6.85px;color:#000;font-weight:bold;transform:scale(1,1.08);transform-origin:0 50%;-webkit-text-stroke:0.18px #000;">Book</div>
<div class="t" style="left:26.80px;top:157.60px;height:9.4px;line-height:9.4px;font-size:6.85px;color:#000;font-weight:bold;transform:scale(1,1.08);transform-origin:0 50%;width:64.6px;overflow:hidden;-webkit-text-stroke:0.18px #000;">Constructible Objec</div>
<div class="t" style="left:26.80px;top:167.00px;height:9.4px;line-height:9.4px;font-size:6.85px;color:#000;font-weight:bold;transform:scale(1,1.08);transform-origin:0 50%;-webkit-text-stroke:0.18px #000;">Ingredient</div>
<div class="t" style="left:26.80px;top:176.40px;height:9.4px;line-height:9.4px;font-size:6.85px;color:#000;font-weight:bold;transform:scale(1,1.08);transform-origin:0 50%;-webkit-text-stroke:0.18px #000;">Key</div>
<div class="t" style="left:26.80px;top:185.80px;height:9.4px;line-height:9.4px;font-size:6.85px;color:#000;font-weight:bold;transform:scale(1,1.08);transform-origin:0 50%;-webkit-text-stroke:0.18px #000;">LeveledItem</div>
<div class="t" style="left:26.80px;top:195.20px;height:9.4px;line-height:9.4px;font-size:6.85px;color:#000;font-weight:bold;transform:scale(1,1.08);transform-origin:0 50%;-webkit-text-stroke:0.18px #000;">MiscItem</div>
<div class="t" style="left:26.80px;top:204.60px;height:9.4px;line-height:9.4px;font-size:6.85px;color:#000;font-weight:bold;transform:scale(1,1.08);transform-origin:0 50%;-webkit-text-stroke:0.18px #000;">Outfit</div>
<div class="t" style="left:26.80px;top:214.00px;height:9.4px;line-height:9.4px;font-size:6.85px;color:#000;font-weight:bold;transform:scale(1,1.08);transform-origin:0 50%;-webkit-text-stroke:0.18px #000;">Soul Gem</div>
<div class="t" style="left:26.80px;top:223.40px;height:9.4px;line-height:9.4px;font-size:6.85px;color:#000;font-weight:bold;transform:scale(1,1.08);transform-origin:0 50%;-webkit-text-stroke:0.18px #000;">Weapon</div>
<div class="t" style="left:15.40px;top:232.80px;height:9.4px;line-height:9.4px;font-size:6.85px;color:#000;font-weight:bold;transform:scale(1,1.08);transform-origin:0 50%;-webkit-text-stroke:0.18px #000;">Magic</div>
<div class="t" style="left:15.40px;top:242.20px;height:9.4px;line-height:9.4px;font-size:6.85px;color:#000;font-weight:bold;transform:scale(1,1.08);transform-origin:0 50%;-webkit-text-stroke:0.18px #000;">Miscellaneous</div>
<div class="t" style="left:15.40px;top:251.60px;height:9.4px;line-height:9.4px;font-size:6.85px;color:#000;font-weight:bold;transform:scale(1,1.08);transform-origin:0 50%;-webkit-text-stroke:0.18px #000;">SpecialEffect</div>
<div class="t" style="left:15.40px;top:261.00px;height:9.4px;line-height:9.4px;font-size:6.85px;color:#000;font-weight:bold;transform:scale(1,1.08);transform-origin:0 50%;-webkit-text-stroke:0.18px #000;">WorldData</div>
<div class="t" style="left:15.40px;top:270.40px;height:9.4px;line-height:9.4px;font-size:6.85px;color:#000;font-weight:bold;transform:scale(1,1.08);transform-origin:0 50%;-webkit-text-stroke:0.18px #000;">WorldObjects</div>
<div class="t" style="left:15.40px;top:279.80px;height:9.4px;line-height:9.4px;font-size:6.85px;color:#000;font-weight:bold;transform:scale(1,1.08);transform-origin:0 50%;-webkit-text-stroke:0.18px #000;">*All</div>
<div class="a" style="left:1.6px;top:455.8px;width:89.2px;height:9px;background:#f0f0f0"></div>
<div class="a" style="left:11px;top:456px;width:66px;height:8.4px;background:#cdcdcd"></div>
<svg style="left:0;top:455px" width="95" height="11" viewBox="0 0 95 11"><g stroke="#3a3a3a" stroke-width="1.15" fill="none"><path d="M7 3.2 L4.8 5.3 L7 7.4"/><path d="M84.4 3.2 L86.6 5.3 L84.4 7.4"/></g></svg>
<div class="a" style="left:94px;top:64px;width:229px;height:401px;background:#fff;border:1px solid #c2c8d0;border-top-color:#ccd3da;border-right-color:#e4e6ea"></div>
<div class="a lv" style="left:95px;top:65px;width:217.0px;height:391.00px;overflow:hidden;will-change:transform">
<div class="t" style="left:4.70px;top:3.30px;height:10px;line-height:10px;font-size:8.4px;color:#222;transform:scale(0.731,1);transform-origin:0 50%;">Editor ID</div>
<div class="t" style="left:163.80px;top:3.30px;height:10px;line-height:10px;font-size:8.4px;color:#222;width:52.40px;text-align:center;transform:scale(0.731,1);transform-origin:50% 50%;">Form ID</div>
<div class="a" style="left:164.60000000000002px;top:0;width:0.7px;height:15.2px;background:#e5e5e5"></div>
<div class="a" style="left:164.60000000000002px;top:15.2px;width:0.7px;height:380px;background:#f0f0f0"></div>
<div class="a" style="left:0;top:23.99px;width:217px;height:0.7px;background:#f0f0f0"></div>
<svg style="left:2.8px;top:15.10px" width="10" height="9.6" viewBox="0 0 10 9.6"><path d="M2.6 2.4 L7.6 2.2 L9.4 6.6 L8.4 8.8 L4.6 9.2 L0.6 8.8 L1 6.8 Z" fill="#b4b4ac"/><path d="M2.8 0.5 L7.4 0.1 L7.9 2 L2.6 2.4 Z" fill="#333"/><path d="M3.4 0.7 L6.4 0.4 L6.6 1.1 L3.4 1.4 Z" fill="#8e8e8e"/><path d="M3.5 3.2 L6 2.9 L6.1 6.2 L3.9 6.8 Z" fill="#f2f2f2"/><path d="M2.6 2.6 L0.9 7.2" stroke="#3c3c3c" stroke-width="0.85" fill="none"/><path d="M6.6 2.7 L1.2 8.4 M1 7 L3.2 9 M0.8 8.8 L6 8.2" stroke="#7c7c14" stroke-width="0.85" fill="none"/><path d="M6.1 2.9 L7.6 3.2 L7.9 6.6 L6.3 6.6 Z" fill="#141414"/><path d="M5.8 7.3 L8.8 6.9 L8.6 9 L6.2 9.2 Z" fill="#1a1a1a"/><path d="M7.7 2.4 L9.5 7" stroke="#2a2a2a" stroke-width="0.7" fill="none"/><circle cx="7.5" cy="4.2" r="0.6" fill="#22b8cc"/><circle cx="7.7" cy="5.9" r="0.9" fill="#c8800e"/><circle cx="8.8" cy="6.3" r="0.55" fill="#7e7e18"/><circle cx="3.6" cy="8.2" r="0.55" fill="#e42222"/><circle cx="5.5" cy="2.4" r="0.55" fill="#7a1212"/></svg>
<div class="t" style="left:14.00px;top:16.05px;height:9.6px;line-height:9.6px;font-size:8.4px;color:#141414;transform:scale(0.731,1);transform-origin:0 50%;">0HestiaGloves</div>
<div class="t" style="left:163.80px;top:16.05px;height:9.6px;line-height:9.6px;font-size:8.4px;color:#141414;width:52.40px;text-align:center;transform:scale(0.731,1);transform-origin:50% 50%;">020012CE</div>
<div class="a" style="left:0;top:33.98px;width:217px;height:0.7px;background:#f0f0f0"></div>
<svg style="left:2.8px;top:25.09px" width="10" height="9.6" viewBox="0 0 10 9.6"><path d="M2.6 2.4 L7.6 2.2 L9.4 6.6 L8.4 8.8 L4.6 9.2 L0.6 8.8 L1 6.8 Z" fill="#b4b4ac"/><path d="M2.8 0.5 L7.4 0.1 L7.9 2 L2.6 2.4 Z" fill="#333"/><path d="M3.4 0.7 L6.4 0.4 L6.6 1.1 L3.4 1.4 Z" fill="#8e8e8e"/><path d="M3.5 3.2 L6 2.9 L6.1 6.2 L3.9 6.8 Z" fill="#f2f2f2"/><path d="M2.6 2.6 L0.9 7.2" stroke="#3c3c3c" stroke-width="0.85" fill="none"/><path d="M6.6 2.7 L1.2 8.4 M1 7 L3.2 9 M0.8 8.8 L6 8.2" stroke="#7c7c14" stroke-width="0.85" fill="none"/><path d="M6.1 2.9 L7.6 3.2 L7.9 6.6 L6.3 6.6 Z" fill="#141414"/><path d="M5.8 7.3 L8.8 6.9 L8.6 9 L6.2 9.2 Z" fill="#1a1a1a"/><path d="M7.7 2.4 L9.5 7" stroke="#2a2a2a" stroke-width="0.7" fill="none"/><circle cx="7.5" cy="4.2" r="0.6" fill="#22b8cc"/><circle cx="7.7" cy="5.9" r="0.9" fill="#c8800e"/><circle cx="8.8" cy="6.3" r="0.55" fill="#7e7e18"/><circle cx="3.6" cy="8.2" r="0.55" fill="#e42222"/><circle cx="5.5" cy="2.4" r="0.55" fill="#7a1212"/></svg>
<div class="t" style="left:14.00px;top:26.03px;height:9.6px;line-height:9.6px;font-size:8.4px;color:#141414;transform:scale(0.731,1);transform-origin:0 50%;">0HestiaHat</div>
<div class="t" style="left:163.80px;top:26.03px;height:9.6px;line-height:9.6px;font-size:8.4px;color:#141414;width:52.40px;text-align:center;transform:scale(0.731,1);transform-origin:50% 50%;">020012CF</div>
<div class="a" style="left:0;top:43.97px;width:217px;height:0.7px;background:#f0f0f0"></div>
<svg style="left:2.8px;top:35.08px" width="10" height="9.6" viewBox="0 0 10 9.6"><path d="M2.6 2.4 L7.6 2.2 L9.4 6.6 L8.4 8.8 L4.6 9.2 L0.6 8.8 L1 6.8 Z" fill="#b4b4ac"/><path d="M2.8 0.5 L7.4 0.1 L7.9 2 L2.6 2.4 Z" fill="#333"/><path d="M3.4 0.7 L6.4 0.4 L6.6 1.1 L3.4 1.4 Z" fill="#8e8e8e"/><path d="M3.5 3.2 L6 2.9 L6.1 6.2 L3.9 6.8 Z" fill="#f2f2f2"/><path d="M2.6 2.6 L0.9 7.2" stroke="#3c3c3c" stroke-width="0.85" fill="none"/><path d="M6.6 2.7 L1.2 8.4 M1 7 L3.2 9 M0.8 8.8 L6 8.2" stroke="#7c7c14" stroke-width="0.85" fill="none"/><path d="M6.1 2.9 L7.6 3.2 L7.9 6.6 L6.3 6.6 Z" fill="#141414"/><path d="M5.8 7.3 L8.8 6.9 L8.6 9 L6.2 9.2 Z" fill="#1a1a1a"/><path d="M7.7 2.4 L9.5 7" stroke="#2a2a2a" stroke-width="0.7" fill="none"/><circle cx="7.5" cy="4.2" r="0.6" fill="#22b8cc"/><circle cx="7.7" cy="5.9" r="0.9" fill="#c8800e"/><circle cx="8.8" cy="6.3" r="0.55" fill="#7e7e18"/><circle cx="3.6" cy="8.2" r="0.55" fill="#e42222"/><circle cx="5.5" cy="2.4" r="0.55" fill="#7a1212"/></svg>
<div class="t" style="left:14.00px;top:36.03px;height:9.6px;line-height:9.6px;font-size:8.4px;color:#141414;transform:scale(0.731,1);transform-origin:0 50%;">0HestiaHatSMP</div>
<div class="t" style="left:163.80px;top:36.03px;height:9.6px;line-height:9.6px;font-size:8.4px;color:#141414;width:52.40px;text-align:center;transform:scale(0.731,1);transform-origin:50% 50%;">02001D98</div>
<div class="a" style="left:0;top:53.96px;width:217px;height:0.7px;background:#f0f0f0"></div>
<svg style="left:2.8px;top:45.07px" width="10" height="9.6" viewBox="0 0 10 9.6"><path d="M2.6 2.4 L7.6 2.2 L9.4 6.6 L8.4 8.8 L4.6 9.2 L0.6 8.8 L1 6.8 Z" fill="#b4b4ac"/><path d="M2.8 0.5 L7.4 0.1 L7.9 2 L2.6 2.4 Z" fill="#333"/><path d="M3.4 0.7 L6.4 0.4 L6.6 1.1 L3.4 1.4 Z" fill="#8e8e8e"/><path d="M3.5 3.2 L6 2.9 L6.1 6.2 L3.9 6.8 Z" fill="#f2f2f2"/><path d="M2.6 2.6 L0.9 7.2" stroke="#3c3c3c" stroke-width="0.85" fill="none"/><path d="M6.6 2.7 L1.2 8.4 M1 7 L3.2 9 M0.8 8.8 L6 8.2" stroke="#7c7c14" stroke-width="0.85" fill="none"/><path d="M6.1 2.9 L7.6 3.2 L7.9 6.6 L6.3 6.6 Z" fill="#141414"/><path d="M5.8 7.3 L8.8 6.9 L8.6 9 L6.2 9.2 Z" fill="#1a1a1a"/><path d="M7.7 2.4 L9.5 7" stroke="#2a2a2a" stroke-width="0.7" fill="none"/><circle cx="7.5" cy="4.2" r="0.6" fill="#22b8cc"/><circle cx="7.7" cy="5.9" r="0.9" fill="#c8800e"/><circle cx="8.8" cy="6.3" r="0.55" fill="#7e7e18"/><circle cx="3.6" cy="8.2" r="0.55" fill="#e42222"/><circle cx="5.5" cy="2.4" r="0.55" fill="#7a1212"/></svg>
<div class="t" style="left:14.00px;top:46.02px;height:9.6px;line-height:9.6px;font-size:8.4px;color:#141414;transform:scale(0.731,1);transform-origin:0 50%;">0HestiaHeels</div>
<div class="t" style="left:163.80px;top:46.02px;height:9.6px;line-height:9.6px;font-size:8.4px;color:#141414;width:52.40px;text-align:center;transform:scale(0.731,1);transform-origin:50% 50%;">020012C9</div>
<div class="a" style="left:0;top:63.95px;width:217px;height:0.7px;background:#f0f0f0"></div>
<div class="a" style="left:13.0px;top:55.16px;width:203.4px;height:9.29px;background:#0078d7"></div>
<svg style="left:2.8px;top:55.06px" width="10" height="9.6" viewBox="0 0 10 9.6"><path d="M2.6 2.4 L7.6 2.2 L9.4 6.6 L8.4 8.8 L4.6 9.2 L0.6 8.8 L1 6.8 Z" fill="#b4b4ac"/><path d="M2.8 0.5 L7.4 0.1 L7.9 2 L2.6 2.4 Z" fill="#333"/><path d="M3.4 0.7 L6.4 0.4 L6.6 1.1 L3.4 1.4 Z" fill="#8e8e8e"/><path d="M3.5 3.2 L6 2.9 L6.1 6.2 L3.9 6.8 Z" fill="#f2f2f2"/><path d="M2.6 2.6 L0.9 7.2" stroke="#3c3c3c" stroke-width="0.85" fill="none"/><path d="M6.6 2.7 L1.2 8.4 M1 7 L3.2 9 M0.8 8.8 L6 8.2" stroke="#7c7c14" stroke-width="0.85" fill="none"/><path d="M6.1 2.9 L7.6 3.2 L7.9 6.6 L6.3 6.6 Z" fill="#141414"/><path d="M5.8 7.3 L8.8 6.9 L8.6 9 L6.2 9.2 Z" fill="#1a1a1a"/><path d="M7.7 2.4 L9.5 7" stroke="#2a2a2a" stroke-width="0.7" fill="none"/><circle cx="7.5" cy="4.2" r="0.6" fill="#22b8cc"/><circle cx="7.7" cy="5.9" r="0.9" fill="#c8800e"/><circle cx="8.8" cy="6.3" r="0.55" fill="#7e7e18"/><circle cx="3.6" cy="8.2" r="0.55" fill="#e42222"/><circle cx="5.5" cy="2.4" r="0.55" fill="#7a1212"/><rect x="0" y="0" width="10" height="9.6" fill="#0078d7" opacity="0.35"/></svg>
<div class="t" style="left:14.00px;top:56.01px;height:9.6px;line-height:9.6px;font-size:8.4px;color:#fff;transform:scale(0.731,1);transform-origin:0 50%;">0HestiaPanty</div>
<div class="t" style="left:163.80px;top:56.01px;height:9.6px;line-height:9.6px;font-size:8.4px;color:#fff;width:52.40px;text-align:center;transform:scale(0.731,1);transform-origin:50% 50%;">020012D0</div>
<div class="a" style="left:0;top:73.94px;width:217px;height:0.7px;background:#f0f0f0"></div>
<svg style="left:2.8px;top:65.05px" width="10" height="9.6" viewBox="0 0 10 9.6"><path d="M2.6 2.4 L7.6 2.2 L9.4 6.6 L8.4 8.8 L4.6 9.2 L0.6 8.8 L1 6.8 Z" fill="#b4b4ac"/><path d="M2.8 0.5 L7.4 0.1 L7.9 2 L2.6 2.4 Z" fill="#333"/><path d="M3.4 0.7 L6.4 0.4 L6.6 1.1 L3.4 1.4 Z" fill="#8e8e8e"/><path d="M3.5 3.2 L6 2.9 L6.1 6.2 L3.9 6.8 Z" fill="#f2f2f2"/><path d="M2.6 2.6 L0.9 7.2" stroke="#3c3c3c" stroke-width="0.85" fill="none"/><path d="M6.6 2.7 L1.2 8.4 M1 7 L3.2 9 M0.8 8.8 L6 8.2" stroke="#7c7c14" stroke-width="0.85" fill="none"/><path d="M6.1 2.9 L7.6 3.2 L7.9 6.6 L6.3 6.6 Z" fill="#141414"/><path d="M5.8 7.3 L8.8 6.9 L8.6 9 L6.2 9.2 Z" fill="#1a1a1a"/><path d="M7.7 2.4 L9.5 7" stroke="#2a2a2a" stroke-width="0.7" fill="none"/><circle cx="7.5" cy="4.2" r="0.6" fill="#22b8cc"/><circle cx="7.7" cy="5.9" r="0.9" fill="#c8800e"/><circle cx="8.8" cy="6.3" r="0.55" fill="#7e7e18"/><circle cx="3.6" cy="8.2" r="0.55" fill="#e42222"/><circle cx="5.5" cy="2.4" r="0.55" fill="#7a1212"/></svg>
<div class="t" style="left:14.00px;top:65.99px;height:9.6px;line-height:9.6px;font-size:8.4px;color:#141414;transform:scale(0.731,1);transform-origin:0 50%;">0HestiaStockings</div>
<div class="t" style="left:163.80px;top:65.99px;height:9.6px;line-height:9.6px;font-size:8.4px;color:#141414;width:52.40px;text-align:center;transform:scale(0.731,1);transform-origin:50% 50%;">020012D1</div>
<div class="a" style="left:0;top:83.93px;width:217px;height:0.7px;background:#f0f0f0"></div>
<svg style="left:2.8px;top:75.04px" width="10" height="9.6" viewBox="0 0 10 9.6"><path d="M2.6 2.4 L7.6 2.2 L9.4 6.6 L8.4 8.8 L4.6 9.2 L0.6 8.8 L1 6.8 Z" fill="#b4b4ac"/><path d="M2.8 0.5 L7.4 0.1 L7.9 2 L2.6 2.4 Z" fill="#333"/><path d="M3.4 0.7 L6.4 0.4 L6.6 1.1 L3.4 1.4 Z" fill="#8e8e8e"/><path d="M3.5 3.2 L6 2.9 L6.1 6.2 L3.9 6.8 Z" fill="#f2f2f2"/><path d="M2.6 2.6 L0.9 7.2" stroke="#3c3c3c" stroke-width="0.85" fill="none"/><path d="M6.6 2.7 L1.2 8.4 M1 7 L3.2 9 M0.8 8.8 L6 8.2" stroke="#7c7c14" stroke-width="0.85" fill="none"/><path d="M6.1 2.9 L7.6 3.2 L7.9 6.6 L6.3 6.6 Z" fill="#141414"/><path d="M5.8 7.3 L8.8 6.9 L8.6 9 L6.2 9.2 Z" fill="#1a1a1a"/><path d="M7.7 2.4 L9.5 7" stroke="#2a2a2a" stroke-width="0.7" fill="none"/><circle cx="7.5" cy="4.2" r="0.6" fill="#22b8cc"/><circle cx="7.7" cy="5.9" r="0.9" fill="#c8800e"/><circle cx="8.8" cy="6.3" r="0.55" fill="#7e7e18"/><circle cx="3.6" cy="8.2" r="0.55" fill="#e42222"/><circle cx="5.5" cy="2.4" r="0.55" fill="#7a1212"/></svg>
<div class="t" style="left:14.00px;top:75.98px;height:9.6px;line-height:9.6px;font-size:8.4px;color:#141414;transform:scale(0.731,1);transform-origin:0 50%;">0HestiaTop</div>
<div class="t" style="left:163.80px;top:75.98px;height:9.6px;line-height:9.6px;font-size:8.4px;color:#141414;width:52.40px;text-align:center;transform:scale(0.731,1);transform-origin:50% 50%;">020012C7</div>
<div class="a" style="left:0;top:93.92px;width:217px;height:0.7px;background:#f0f0f0"></div>
<svg style="left:2.8px;top:85.03px" width="10" height="9.6" viewBox="0 0 10 9.6"><path d="M2.6 2.4 L7.6 2.2 L9.4 6.6 L8.4 8.8 L4.6 9.2 L0.6 8.8 L1 6.8 Z" fill="#b4b4ac"/><path d="M2.8 0.5 L7.4 0.1 L7.9 2 L2.6 2.4 Z" fill="#333"/><path d="M3.4 0.7 L6.4 0.4 L6.6 1.1 L3.4 1.4 Z" fill="#8e8e8e"/><path d="M3.5 3.2 L6 2.9 L6.1 6.2 L3.9 6.8 Z" fill="#f2f2f2"/><path d="M2.6 2.6 L0.9 7.2" stroke="#3c3c3c" stroke-width="0.85" fill="none"/><path d="M6.6 2.7 L1.2 8.4 M1 7 L3.2 9 M0.8 8.8 L6 8.2" stroke="#7c7c14" stroke-width="0.85" fill="none"/><path d="M6.1 2.9 L7.6 3.2 L7.9 6.6 L6.3 6.6 Z" fill="#141414"/><path d="M5.8 7.3 L8.8 6.9 L8.6 9 L6.2 9.2 Z" fill="#1a1a1a"/><path d="M7.7 2.4 L9.5 7" stroke="#2a2a2a" stroke-width="0.7" fill="none"/><circle cx="7.5" cy="4.2" r="0.6" fill="#22b8cc"/><circle cx="7.7" cy="5.9" r="0.9" fill="#c8800e"/><circle cx="8.8" cy="6.3" r="0.55" fill="#7e7e18"/><circle cx="3.6" cy="8.2" r="0.55" fill="#e42222"/><circle cx="5.5" cy="2.4" r="0.55" fill="#7a1212"/></svg>
<div class="t" style="left:14.00px;top:85.98px;height:9.6px;line-height:9.6px;font-size:8.4px;color:#141414;transform:scale(0.731,1);transform-origin:0 50%;">0HestiaTopSMP</div>
<div class="t" style="left:163.80px;top:85.98px;height:9.6px;line-height:9.6px;font-size:8.4px;color:#141414;width:52.40px;text-align:center;transform:scale(0.731,1);transform-origin:50% 50%;">020022FC</div>
<div class="a" style="left:0;top:103.91px;width:217px;height:0.7px;background:#f0f0f0"></div>
<svg style="left:2.8px;top:95.02px" width="10" height="9.6" viewBox="0 0 10 9.6"><path d="M2.6 2.4 L7.6 2.2 L9.4 6.6 L8.4 8.8 L4.6 9.2 L0.6 8.8 L1 6.8 Z" fill="#b4b4ac"/><path d="M2.8 0.5 L7.4 0.1 L7.9 2 L2.6 2.4 Z" fill="#333"/><path d="M3.4 0.7 L6.4 0.4 L6.6 1.1 L3.4 1.4 Z" fill="#8e8e8e"/><path d="M3.5 3.2 L6 2.9 L6.1 6.2 L3.9 6.8 Z" fill="#f2f2f2"/><path d="M2.6 2.6 L0.9 7.2" stroke="#3c3c3c" stroke-width="0.85" fill="none"/><path d="M6.6 2.7 L1.2 8.4 M1 7 L3.2 9 M0.8 8.8 L6 8.2" stroke="#7c7c14" stroke-width="0.85" fill="none"/><path d="M6.1 2.9 L7.6 3.2 L7.9 6.6 L6.3 6.6 Z" fill="#141414"/><path d="M5.8 7.3 L8.8 6.9 L8.6 9 L6.2 9.2 Z" fill="#1a1a1a"/><path d="M7.7 2.4 L9.5 7" stroke="#2a2a2a" stroke-width="0.7" fill="none"/><circle cx="7.5" cy="4.2" r="0.6" fill="#22b8cc"/><circle cx="7.7" cy="5.9" r="0.9" fill="#c8800e"/><circle cx="8.8" cy="6.3" r="0.55" fill="#7e7e18"/><circle cx="3.6" cy="8.2" r="0.55" fill="#e42222"/><circle cx="5.5" cy="2.4" r="0.55" fill="#7a1212"/></svg>
<div class="t" style="left:14.00px;top:95.97px;height:9.6px;line-height:9.6px;font-size:8.4px;color:#141414;transform:scale(0.731,1);transform-origin:0 50%;">0HestiaTopTR</div>
<div class="t" style="left:163.80px;top:95.97px;height:9.6px;line-height:9.6px;font-size:8.4px;color:#141414;width:52.40px;text-align:center;transform:scale(0.731,1);transform-origin:50% 50%;">02002862</div>
<div class="a" style="left:0;top:113.90px;width:217px;height:0.7px;background:#f0f0f0"></div>
<svg style="left:2.8px;top:105.01px" width="10" height="9.6" viewBox="0 0 10 9.6"><path d="M2.6 2.4 L7.6 2.2 L9.4 6.6 L8.4 8.8 L4.6 9.2 L0.6 8.8 L1 6.8 Z" fill="#b4b4ac"/><path d="M2.8 0.5 L7.4 0.1 L7.9 2 L2.6 2.4 Z" fill="#333"/><path d="M3.4 0.7 L6.4 0.4 L6.6 1.1 L3.4 1.4 Z" fill="#8e8e8e"/><path d="M3.5 3.2 L6 2.9 L6.1 6.2 L3.9 6.8 Z" fill="#f2f2f2"/><path d="M2.6 2.6 L0.9 7.2" stroke="#3c3c3c" stroke-width="0.85" fill="none"/><path d="M6.6 2.7 L1.2 8.4 M1 7 L3.2 9 M0.8 8.8 L6 8.2" stroke="#7c7c14" stroke-width="0.85" fill="none"/><path d="M6.1 2.9 L7.6 3.2 L7.9 6.6 L6.3 6.6 Z" fill="#141414"/><path d="M5.8 7.3 L8.8 6.9 L8.6 9 L6.2 9.2 Z" fill="#1a1a1a"/><path d="M7.7 2.4 L9.5 7" stroke="#2a2a2a" stroke-width="0.7" fill="none"/><circle cx="7.5" cy="4.2" r="0.6" fill="#22b8cc"/><circle cx="7.7" cy="5.9" r="0.9" fill="#c8800e"/><circle cx="8.8" cy="6.3" r="0.55" fill="#7e7e18"/><circle cx="3.6" cy="8.2" r="0.55" fill="#e42222"/><circle cx="5.5" cy="2.4" r="0.55" fill="#7a1212"/></svg>
<div class="t" style="left:14.00px;top:105.95px;height:9.6px;line-height:9.6px;font-size:8.4px;color:#141414;transform:scale(0.731,1);transform-origin:0 50%;">0HestiaTopTRSMP</div>
<div class="t" style="left:163.80px;top:105.95px;height:9.6px;line-height:9.6px;font-size:8.4px;color:#141414;width:52.40px;text-align:center;transform:scale(0.731,1);transform-origin:50% 50%;">02002863</div>
<div class="a" style="left:0;top:123.89px;width:217px;height:0.7px;background:#f0f0f0"></div>
<svg style="left:2.8px;top:115.00px" width="10" height="9.6" viewBox="0 0 10 9.6"><path d="M2.6 2.4 L7.6 2.2 L9.4 6.6 L8.4 8.8 L4.6 9.2 L0.6 8.8 L1 6.8 Z" fill="#b4b4ac"/><path d="M2.8 0.5 L7.4 0.1 L7.9 2 L2.6 2.4 Z" fill="#333"/><path d="M3.4 0.7 L6.4 0.4 L6.6 1.1 L3.4 1.4 Z" fill="#8e8e8e"/><path d="M3.5 3.2 L6 2.9 L6.1 6.2 L3.9 6.8 Z" fill="#f2f2f2"/><path d="M2.6 2.6 L0.9 7.2" stroke="#3c3c3c" stroke-width="0.85" fill="none"/><path d="M6.6 2.7 L1.2 8.4 M1 7 L3.2 9 M0.8 8.8 L6 8.2" stroke="#7c7c14" stroke-width="0.85" fill="none"/><path d="M6.1 2.9 L7.6 3.2 L7.9 6.6 L6.3 6.6 Z" fill="#141414"/><path d="M5.8 7.3 L8.8 6.9 L8.6 9 L6.2 9.2 Z" fill="#1a1a1a"/><path d="M7.7 2.4 L9.5 7" stroke="#2a2a2a" stroke-width="0.7" fill="none"/><circle cx="7.5" cy="4.2" r="0.6" fill="#22b8cc"/><circle cx="7.7" cy="5.9" r="0.9" fill="#c8800e"/><circle cx="8.8" cy="6.3" r="0.55" fill="#7e7e18"/><circle cx="3.6" cy="8.2" r="0.55" fill="#e42222"/><circle cx="5.5" cy="2.4" r="0.55" fill="#7a1212"/></svg>
<div class="t" style="left:14.00px;top:115.95px;height:9.6px;line-height:9.6px;font-size:8.4px;color:#141414;transform:scale(0.731,1);transform-origin:0 50%;">AncientNordAmulet</div>
<div class="t" style="left:163.80px;top:115.95px;height:9.6px;line-height:9.6px;font-size:8.4px;color:#141414;width:52.40px;text-align:center;transform:scale(0.731,1);transform-origin:50% 50%;">000CC842</div>
<div class="a" style="left:0;top:133.88px;width:217px;height:0.7px;background:#f0f0f0"></div>
<svg style="left:2.8px;top:124.99px" width="10" height="9.6" viewBox="0 0 10 9.6"><path d="M2.6 2.4 L7.6 2.2 L9.4 6.6 L8.4 8.8 L4.6 9.2 L0.6 8.8 L1 6.8 Z" fill="#b4b4ac"/><path d="M2.8 0.5 L7.4 0.1 L7.9 2 L2.6 2.4 Z" fill="#333"/><path d="M3.4 0.7 L6.4 0.4 L6.6 1.1 L3.4 1.4 Z" fill="#8e8e8e"/><path d="M3.5 3.2 L6 2.9 L6.1 6.2 L3.9 6.8 Z" fill="#f2f2f2"/><path d="M2.6 2.6 L0.9 7.2" stroke="#3c3c3c" stroke-width="0.85" fill="none"/><path d="M6.6 2.7 L1.2 8.4 M1 7 L3.2 9 M0.8 8.8 L6 8.2" stroke="#7c7c14" stroke-width="0.85" fill="none"/><path d="M6.1 2.9 L7.6 3.2 L7.9 6.6 L6.3 6.6 Z" fill="#141414"/><path d="M5.8 7.3 L8.8 6.9 L8.6 9 L6.2 9.2 Z" fill="#1a1a1a"/><path d="M7.7 2.4 L9.5 7" stroke="#2a2a2a" stroke-width="0.7" fill="none"/><circle cx="7.5" cy="4.2" r="0.6" fill="#22b8cc"/><circle cx="7.7" cy="5.9" r="0.9" fill="#c8800e"/><circle cx="8.8" cy="6.3" r="0.55" fill="#7e7e18"/><circle cx="3.6" cy="8.2" r="0.55" fill="#e42222"/><circle cx="5.5" cy="2.4" r="0.55" fill="#7a1212"/></svg>
<div class="t" style="left:14.00px;top:125.93px;height:9.6px;line-height:9.6px;font-size:8.4px;color:#141414;transform:scale(0.731,1);transform-origin:0 50%;">ArmorAfflicted</div>
<div class="t" style="left:163.80px;top:125.93px;height:9.6px;line-height:9.6px;font-size:8.4px;color:#141414;width:52.40px;text-align:center;transform:scale(0.731,1);transform-origin:50% 50%;">00097A43</div>
<div class="a" style="left:0;top:143.87px;width:217px;height:0.7px;background:#f0f0f0"></div>
<svg style="left:2.8px;top:134.98px" width="10" height="9.6" viewBox="0 0 10 9.6"><path d="M2.6 2.4 L7.6 2.2 L9.4 6.6 L8.4 8.8 L4.6 9.2 L0.6 8.8 L1 6.8 Z" fill="#b4b4ac"/><path d="M2.8 0.5 L7.4 0.1 L7.9 2 L2.6 2.4 Z" fill="#333"/><path d="M3.4 0.7 L6.4 0.4 L6.6 1.1 L3.4 1.4 Z" fill="#8e8e8e"/><path d="M3.5 3.2 L6 2.9 L6.1 6.2 L3.9 6.8 Z" fill="#f2f2f2"/><path d="M2.6 2.6 L0.9 7.2" stroke="#3c3c3c" stroke-width="0.85" fill="none"/><path d="M6.6 2.7 L1.2 8.4 M1 7 L3.2 9 M0.8 8.8 L6 8.2" stroke="#7c7c14" stroke-width="0.85" fill="none"/><path d="M6.1 2.9 L7.6 3.2 L7.9 6.6 L6.3 6.6 Z" fill="#141414"/><path d="M5.8 7.3 L8.8 6.9 L8.6 9 L6.2 9.2 Z" fill="#1a1a1a"/><path d="M7.7 2.4 L9.5 7" stroke="#2a2a2a" stroke-width="0.7" fill="none"/><circle cx="7.5" cy="4.2" r="0.6" fill="#22b8cc"/><circle cx="7.7" cy="5.9" r="0.9" fill="#c8800e"/><circle cx="8.8" cy="6.3" r="0.55" fill="#7e7e18"/><circle cx="3.6" cy="8.2" r="0.55" fill="#e42222"/><circle cx="5.5" cy="2.4" r="0.55" fill="#7a1212"/></svg>
<div class="t" style="left:14.00px;top:135.92px;height:9.6px;line-height:9.6px;font-size:8.4px;color:#141414;transform:scale(0.731,1);transform-origin:0 50%;">ArmorAstrid</div>
<div class="t" style="left:163.80px;top:135.92px;height:9.6px;line-height:9.6px;font-size:8.4px;color:#141414;width:52.40px;text-align:center;transform:scale(0.731,1);transform-origin:50% 50%;">0007EAF1</div>
<div class="a" style="left:0;top:153.86px;width:217px;height:0.7px;background:#f0f0f0"></div>
<svg style="left:2.8px;top:144.97px" width="10" height="9.6" viewBox="0 0 10 9.6"><path d="M2.6 2.4 L7.6 2.2 L9.4 6.6 L8.4 8.8 L4.6 9.2 L0.6 8.8 L1 6.8 Z" fill="#b4b4ac"/><path d="M2.8 0.5 L7.4 0.1 L7.9 2 L2.6 2.4 Z" fill="#333"/><path d="M3.4 0.7 L6.4 0.4 L6.6 1.1 L3.4 1.4 Z" fill="#8e8e8e"/><path d="M3.5 3.2 L6 2.9 L6.1 6.2 L3.9 6.8 Z" fill="#f2f2f2"/><path d="M2.6 2.6 L0.9 7.2" stroke="#3c3c3c" stroke-width="0.85" fill="none"/><path d="M6.6 2.7 L1.2 8.4 M1 7 L3.2 9 M0.8 8.8 L6 8.2" stroke="#7c7c14" stroke-width="0.85" fill="none"/><path d="M6.1 2.9 L7.6 3.2 L7.9 6.6 L6.3 6.6 Z" fill="#141414"/><path d="M5.8 7.3 L8.8 6.9 L8.6 9 L6.2 9.2 Z" fill="#1a1a1a"/><path d="M7.7 2.4 L9.5 7" stroke="#2a2a2a" stroke-width="0.7" fill="none"/><circle cx="7.5" cy="4.2" r="0.6" fill="#22b8cc"/><circle cx="7.7" cy="5.9" r="0.9" fill="#c8800e"/><circle cx="8.8" cy="6.3" r="0.55" fill="#7e7e18"/><circle cx="3.6" cy="8.2" r="0.55" fill="#e42222"/><circle cx="5.5" cy="2.4" r="0.55" fill="#7a1212"/></svg>
<div class="t" style="left:14.00px;top:145.91px;height:9.6px;line-height:9.6px;font-size:8.4px;color:#141414;transform:scale(0.731,1);transform-origin:0 50%;">ArmorAtronachFlameDead</div>
<div class="t" style="left:163.80px;top:145.91px;height:9.6px;line-height:9.6px;font-size:8.4px;color:#141414;width:52.40px;text-align:center;transform:scale(0.731,1);transform-origin:50% 50%;">00060DA7</div>
<div class="a" style="left:0;top:163.85px;width:217px;height:0.7px;background:#f0f0f0"></div>
<svg style="left:2.8px;top:154.96px" width="10" height="9.6" viewBox="0 0 10 9.6"><path d="M2.6 2.4 L7.6 2.2 L9.4 6.6 L8.4 8.8 L4.6 9.2 L0.6 8.8 L1 6.8 Z" fill="#b4b4ac"/><path d="M2.8 0.5 L7.4 0.1 L7.9 2 L2.6 2.4 Z" fill="#333"/><path d="M3.4 0.7 L6.4 0.4 L6.6 1.1 L3.4 1.4 Z" fill="#8e8e8e"/><path d="M3.5 3.2 L6 2.9 L6.1 6.2 L3.9 6.8 Z" fill="#f2f2f2"/><path d="M2.6 2.6 L0.9 7.2" stroke="#3c3c3c" stroke-width="0.85" fill="none"/><path d="M6.6 2.7 L1.2 8.4 M1 7 L3.2 9 M0.8 8.8 L6 8.2" stroke="#7c7c14" stroke-width="0.85" fill="none"/><path d="M6.1 2.9 L7.6 3.2 L7.9 6.6 L6.3 6.6 Z" fill="#141414"/><path d="M5.8 7.3 L8.8 6.9 L8.6 9 L6.2 9.2 Z" fill="#1a1a1a"/><path d="M7.7 2.4 L9.5 7" stroke="#2a2a2a" stroke-width="0.7" fill="none"/><circle cx="7.5" cy="4.2" r="0.6" fill="#22b8cc"/><circle cx="7.7" cy="5.9" r="0.9" fill="#c8800e"/><circle cx="8.8" cy="6.3" r="0.55" fill="#7e7e18"/><circle cx="3.6" cy="8.2" r="0.55" fill="#e42222"/><circle cx="5.5" cy="2.4" r="0.55" fill="#7a1212"/></svg>
<div class="t" style="left:14.00px;top:155.91px;height:9.6px;line-height:9.6px;font-size:8.4px;color:#141414;transform:scale(0.731,1);transform-origin:0 50%;">ArmorAtronachFrostShield</div>
<div class="t" style="left:163.80px;top:155.91px;height:9.6px;line-height:9.6px;font-size:8.4px;color:#141414;width:52.40px;text-align:center;transform:scale(0.731,1);transform-origin:50% 50%;">0004408F</div>
<div class="a" style="left:0;top:173.84px;width:217px;height:0.7px;background:#f0f0f0"></div>
<svg style="left:2.8px;top:164.95px" width="10" height="9.6" viewBox="0 0 10 9.6"><path d="M2.6 2.4 L7.6 2.2 L9.4 6.6 L8.4 8.8 L4.6 9.2 L0.6 8.8 L1 6.8 Z" fill="#b4b4ac"/><path d="M2.8 0.5 L7.4 0.1 L7.9 2 L2.6 2.4 Z" fill="#333"/><path d="M3.4 0.7 L6.4 0.4 L6.6 1.1 L3.4 1.4 Z" fill="#8e8e8e"/><path d="M3.5 3.2 L6 2.9 L6.1 6.2 L3.9 6.8 Z" fill="#f2f2f2"/><path d="M2.6 2.6 L0.9 7.2" stroke="#3c3c3c" stroke-width="0.85" fill="none"/><path d="M6.6 2.7 L1.2 8.4 M1 7 L3.2 9 M0.8 8.8 L6 8.2" stroke="#7c7c14" stroke-width="0.85" fill="none"/><path d="M6.1 2.9 L7.6 3.2 L7.9 6.6 L6.3 6.6 Z" fill="#141414"/><path d="M5.8 7.3 L8.8 6.9 L8.6 9 L6.2 9.2 Z" fill="#1a1a1a"/><path d="M7.7 2.4 L9.5 7" stroke="#2a2a2a" stroke-width="0.7" fill="none"/><circle cx="7.5" cy="4.2" r="0.6" fill="#22b8cc"/><circle cx="7.7" cy="5.9" r="0.9" fill="#c8800e"/><circle cx="8.8" cy="6.3" r="0.55" fill="#7e7e18"/><circle cx="3.6" cy="8.2" r="0.55" fill="#e42222"/><circle cx="5.5" cy="2.4" r="0.55" fill="#7a1212"/></svg>
<div class="t" style="left:14.00px;top:165.89px;height:9.6px;line-height:9.6px;font-size:8.4px;color:#141414;transform:scale(0.731,1);transform-origin:0 50%;">ArmorBanditBoots</div>
<div class="t" style="left:163.80px;top:165.89px;height:9.6px;line-height:9.6px;font-size:8.4px;color:#141414;width:52.40px;text-align:center;transform:scale(0.731,1);transform-origin:50% 50%;">0006F398</div>
<div class="a" style="left:0;top:183.83px;width:217px;height:0.7px;background:#f0f0f0"></div>
<svg style="left:2.8px;top:174.94px" width="10" height="9.6" viewBox="0 0 10 9.6"><path d="M2.6 2.4 L7.6 2.2 L9.4 6.6 L8.4 8.8 L4.6 9.2 L0.6 8.8 L1 6.8 Z" fill="#b4b4ac"/><path d="M2.8 0.5 L7.4 0.1 L7.9 2 L2.6 2.4 Z" fill="#333"/><path d="M3.4 0.7 L6.4 0.4 L6.6 1.1 L3.4 1.4 Z" fill="#8e8e8e"/><path d="M3.5 3.2 L6 2.9 L6.1 6.2 L3.9 6.8 Z" fill="#f2f2f2"/><path d="M2.6 2.6 L0.9 7.2" stroke="#3c3c3c" stroke-width="0.85" fill="none"/><path d="M6.6 2.7 L1.2 8.4 M1 7 L3.2 9 M0.8 8.8 L6 8.2" stroke="#7c7c14" stroke-width="0.85" fill="none"/><path d="M6.1 2.9 L7.6 3.2 L7.9 6.6 L6.3 6.6 Z" fill="#141414"/><path d="M5.8 7.3 L8.8 6.9 L8.6 9 L6.2 9.2 Z" fill="#1a1a1a"/><path d="M7.7 2.4 L9.5 7" stroke="#2a2a2a" stroke-width="0.7" fill="none"/><circle cx="7.5" cy="4.2" r="0.6" fill="#22b8cc"/><circle cx="7.7" cy="5.9" r="0.9" fill="#c8800e"/><circle cx="8.8" cy="6.3" r="0.55" fill="#7e7e18"/><circle cx="3.6" cy="8.2" r="0.55" fill="#e42222"/><circle cx="5.5" cy="2.4" r="0.55" fill="#7a1212"/></svg>
<div class="t" style="left:14.00px;top:175.88px;height:9.6px;line-height:9.6px;font-size:8.4px;color:#141414;transform:scale(0.731,1);transform-origin:0 50%;">ArmorBanditCuirass</div>
<div class="t" style="left:163.80px;top:175.88px;height:9.6px;line-height:9.6px;font-size:8.4px;color:#141414;width:52.40px;text-align:center;transform:scale(0.731,1);transform-origin:50% 50%;">0006F393</div>
<div class="a" style="left:0;top:193.82px;width:217px;height:0.7px;background:#f0f0f0"></div>
<svg style="left:2.8px;top:184.93px" width="10" height="9.6" viewBox="0 0 10 9.6"><path d="M2.6 2.4 L7.6 2.2 L9.4 6.6 L8.4 8.8 L4.6 9.2 L0.6 8.8 L1 6.8 Z" fill="#b4b4ac"/><path d="M2.8 0.5 L7.4 0.1 L7.9 2 L2.6 2.4 Z" fill="#333"/><path d="M3.4 0.7 L6.4 0.4 L6.6 1.1 L3.4 1.4 Z" fill="#8e8e8e"/><path d="M3.5 3.2 L6 2.9 L6.1 6.2 L3.9 6.8 Z" fill="#f2f2f2"/><path d="M2.6 2.6 L0.9 7.2" stroke="#3c3c3c" stroke-width="0.85" fill="none"/><path d="M6.6 2.7 L1.2 8.4 M1 7 L3.2 9 M0.8 8.8 L6 8.2" stroke="#7c7c14" stroke-width="0.85" fill="none"/><path d="M6.1 2.9 L7.6 3.2 L7.9 6.6 L6.3 6.6 Z" fill="#141414"/><path d="M5.8 7.3 L8.8 6.9 L8.6 9 L6.2 9.2 Z" fill="#1a1a1a"/><path d="M7.7 2.4 L9.5 7" stroke="#2a2a2a" stroke-width="0.7" fill="none"/><circle cx="7.5" cy="4.2" r="0.6" fill="#22b8cc"/><circle cx="7.7" cy="5.9" r="0.9" fill="#c8800e"/><circle cx="8.8" cy="6.3" r="0.55" fill="#7e7e18"/><circle cx="3.6" cy="8.2" r="0.55" fill="#e42222"/><circle cx="5.5" cy="2.4" r="0.55" fill="#7a1212"/></svg>
<div class="t" style="left:14.00px;top:185.88px;height:9.6px;line-height:9.6px;font-size:8.4px;color:#141414;transform:scale(0.731,1);transform-origin:0 50%;">ArmorBanditCuirass1</div>
<div class="t" style="left:163.80px;top:185.88px;height:9.6px;line-height:9.6px;font-size:8.4px;color:#141414;width:52.40px;text-align:center;transform:scale(0.731,1);transform-origin:50% 50%;">0010594B</div>
<div class="a" style="left:0;top:203.81px;width:217px;height:0.7px;background:#f0f0f0"></div>
<svg style="left:2.8px;top:194.92px" width="10" height="9.6" viewBox="0 0 10 9.6"><path d="M2.6 2.4 L7.6 2.2 L9.4 6.6 L8.4 8.8 L4.6 9.2 L0.6 8.8 L1 6.8 Z" fill="#b4b4ac"/><path d="M2.8 0.5 L7.4 0.1 L7.9 2 L2.6 2.4 Z" fill="#333"/><path d="M3.4 0.7 L6.4 0.4 L6.6 1.1 L3.4 1.4 Z" fill="#8e8e8e"/><path d="M3.5 3.2 L6 2.9 L6.1 6.2 L3.9 6.8 Z" fill="#f2f2f2"/><path d="M2.6 2.6 L0.9 7.2" stroke="#3c3c3c" stroke-width="0.85" fill="none"/><path d="M6.6 2.7 L1.2 8.4 M1 7 L3.2 9 M0.8 8.8 L6 8.2" stroke="#7c7c14" stroke-width="0.85" fill="none"/><path d="M6.1 2.9 L7.6 3.2 L7.9 6.6 L6.3 6.6 Z" fill="#141414"/><path d="M5.8 7.3 L8.8 6.9 L8.6 9 L6.2 9.2 Z" fill="#1a1a1a"/><path d="M7.7 2.4 L9.5 7" stroke="#2a2a2a" stroke-width="0.7" fill="none"/><circle cx="7.5" cy="4.2" r="0.6" fill="#22b8cc"/><circle cx="7.7" cy="5.9" r="0.9" fill="#c8800e"/><circle cx="8.8" cy="6.3" r="0.55" fill="#7e7e18"/><circle cx="3.6" cy="8.2" r="0.55" fill="#e42222"/><circle cx="5.5" cy="2.4" r="0.55" fill="#7a1212"/></svg>
<div class="t" style="left:14.00px;top:195.86px;height:9.6px;line-height:9.6px;font-size:8.4px;color:#141414;transform:scale(0.731,1);transform-origin:0 50%;">ArmorBanditCuirass2</div>
<div class="t" style="left:163.80px;top:195.86px;height:9.6px;line-height:9.6px;font-size:8.4px;color:#141414;width:52.40px;text-align:center;transform:scale(0.731,1);transform-origin:50% 50%;">0010594D</div>
<div class="a" style="left:0;top:213.80px;width:217px;height:0.7px;background:#f0f0f0"></div>
<svg style="left:2.8px;top:204.91px" width="10" height="9.6" viewBox="0 0 10 9.6"><path d="M2.6 2.4 L7.6 2.2 L9.4 6.6 L8.4 8.8 L4.6 9.2 L0.6 8.8 L1 6.8 Z" fill="#b4b4ac"/><path d="M2.8 0.5 L7.4 0.1 L7.9 2 L2.6 2.4 Z" fill="#333"/><path d="M3.4 0.7 L6.4 0.4 L6.6 1.1 L3.4 1.4 Z" fill="#8e8e8e"/><path d="M3.5 3.2 L6 2.9 L6.1 6.2 L3.9 6.8 Z" fill="#f2f2f2"/><path d="M2.6 2.6 L0.9 7.2" stroke="#3c3c3c" stroke-width="0.85" fill="none"/><path d="M6.6 2.7 L1.2 8.4 M1 7 L3.2 9 M0.8 8.8 L6 8.2" stroke="#7c7c14" stroke-width="0.85" fill="none"/><path d="M6.1 2.9 L7.6 3.2 L7.9 6.6 L6.3 6.6 Z" fill="#141414"/><path d="M5.8 7.3 L8.8 6.9 L8.6 9 L6.2 9.2 Z" fill="#1a1a1a"/><path d="M7.7 2.4 L9.5 7" stroke="#2a2a2a" stroke-width="0.7" fill="none"/><circle cx="7.5" cy="4.2" r="0.6" fill="#22b8cc"/><circle cx="7.7" cy="5.9" r="0.9" fill="#c8800e"/><circle cx="8.8" cy="6.3" r="0.55" fill="#7e7e18"/><circle cx="3.6" cy="8.2" r="0.55" fill="#e42222"/><circle cx="5.5" cy="2.4" r="0.55" fill="#7a1212"/></svg>
<div class="t" style="left:14.00px;top:205.85px;height:9.6px;line-height:9.6px;font-size:8.4px;color:#141414;transform:scale(0.731,1);transform-origin:0 50%;">ArmorBanditCuirass3</div>
<div class="t" style="left:163.80px;top:205.85px;height:9.6px;line-height:9.6px;font-size:8.4px;color:#141414;width:52.40px;text-align:center;transform:scale(0.731,1);transform-origin:50% 50%;">0010594F</div>
<div class="a" style="left:0;top:223.79px;width:217px;height:0.7px;background:#f0f0f0"></div>
<svg style="left:2.8px;top:214.90px" width="10" height="9.6" viewBox="0 0 10 9.6"><path d="M2.6 2.4 L7.6 2.2 L9.4 6.6 L8.4 8.8 L4.6 9.2 L0.6 8.8 L1 6.8 Z" fill="#b4b4ac"/><path d="M2.8 0.5 L7.4 0.1 L7.9 2 L2.6 2.4 Z" fill="#333"/><path d="M3.4 0.7 L6.4 0.4 L6.6 1.1 L3.4 1.4 Z" fill="#8e8e8e"/><path d="M3.5 3.2 L6 2.9 L6.1 6.2 L3.9 6.8 Z" fill="#f2f2f2"/><path d="M2.6 2.6 L0.9 7.2" stroke="#3c3c3c" stroke-width="0.85" fill="none"/><path d="M6.6 2.7 L1.2 8.4 M1 7 L3.2 9 M0.8 8.8 L6 8.2" stroke="#7c7c14" stroke-width="0.85" fill="none"/><path d="M6.1 2.9 L7.6 3.2 L7.9 6.6 L6.3 6.6 Z" fill="#141414"/><path d="M5.8 7.3 L8.8 6.9 L8.6 9 L6.2 9.2 Z" fill="#1a1a1a"/><path d="M7.7 2.4 L9.5 7" stroke="#2a2a2a" stroke-width="0.7" fill="none"/><circle cx="7.5" cy="4.2" r="0.6" fill="#22b8cc"/><circle cx="7.7" cy="5.9" r="0.9" fill="#c8800e"/><circle cx="8.8" cy="6.3" r="0.55" fill="#7e7e18"/><circle cx="3.6" cy="8.2" r="0.55" fill="#e42222"/><circle cx="5.5" cy="2.4" r="0.55" fill="#7a1212"/></svg>
<div class="t" style="left:14.00px;top:215.84px;height:9.6px;line-height:9.6px;font-size:8.4px;color:#141414;transform:scale(0.731,1);transform-origin:0 50%;">ArmorBanditGauntlets</div>
<div class="t" style="left:163.80px;top:215.84px;height:9.6px;line-height:9.6px;font-size:8.4px;color:#141414;width:52.40px;text-align:center;transform:scale(0.731,1);transform-origin:50% 50%;">0006F39B</div>
<div class="a" style="left:0;top:233.78px;width:217px;height:0.7px;background:#f0f0f0"></div>
<svg style="left:2.8px;top:224.89px" width="10" height="9.6" viewBox="0 0 10 9.6"><path d="M2.6 2.4 L7.6 2.2 L9.4 6.6 L8.4 8.8 L4.6 9.2 L0.6 8.8 L1 6.8 Z" fill="#b4b4ac"/><path d="M2.8 0.5 L7.4 0.1 L7.9 2 L2.6 2.4 Z" fill="#333"/><path d="M3.4 0.7 L6.4 0.4 L6.6 1.1 L3.4 1.4 Z" fill="#8e8e8e"/><path d="M3.5 3.2 L6 2.9 L6.1 6.2 L3.9 6.8 Z" fill="#f2f2f2"/><path d="M2.6 2.6 L0.9 7.2" stroke="#3c3c3c" stroke-width="0.85" fill="none"/><path d="M6.6 2.7 L1.2 8.4 M1 7 L3.2 9 M0.8 8.8 L6 8.2" stroke="#7c7c14" stroke-width="0.85" fill="none"/><path d="M6.1 2.9 L7.6 3.2 L7.9 6.6 L6.3 6.6 Z" fill="#141414"/><path d="M5.8 7.3 L8.8 6.9 L8.6 9 L6.2 9.2 Z" fill="#1a1a1a"/><path d="M7.7 2.4 L9.5 7" stroke="#2a2a2a" stroke-width="0.7" fill="none"/><circle cx="7.5" cy="4.2" r="0.6" fill="#22b8cc"/><circle cx="7.7" cy="5.9" r="0.9" fill="#c8800e"/><circle cx="8.8" cy="6.3" r="0.55" fill="#7e7e18"/><circle cx="3.6" cy="8.2" r="0.55" fill="#e42222"/><circle cx="5.5" cy="2.4" r="0.55" fill="#7a1212"/></svg>
<div class="t" style="left:14.00px;top:225.83px;height:9.6px;line-height:9.6px;font-size:8.4px;color:#141414;transform:scale(0.731,1);transform-origin:0 50%;">ArmorBanditHelmet</div>
<div class="t" style="left:163.80px;top:225.83px;height:9.6px;line-height:9.6px;font-size:8.4px;color:#141414;width:52.40px;text-align:center;transform:scale(0.731,1);transform-origin:50% 50%;">0006F39E</div>
<div class="a" style="left:0;top:243.77px;width:217px;height:0.7px;background:#f0f0f0"></div>
<svg style="left:2.8px;top:234.88px" width="10" height="9.6" viewBox="0 0 10 9.6"><path d="M2.6 2.4 L7.6 2.2 L9.4 6.6 L8.4 8.8 L4.6 9.2 L0.6 8.8 L1 6.8 Z" fill="#b4b4ac"/><path d="M2.8 0.5 L7.4 0.1 L7.9 2 L2.6 2.4 Z" fill="#333"/><path d="M3.4 0.7 L6.4 0.4 L6.6 1.1 L3.4 1.4 Z" fill="#8e8e8e"/><path d="M3.5 3.2 L6 2.9 L6.1 6.2 L3.9 6.8 Z" fill="#f2f2f2"/><path d="M2.6 2.6 L0.9 7.2" stroke="#3c3c3c" stroke-width="0.85" fill="none"/><path d="M6.6 2.7 L1.2 8.4 M1 7 L3.2 9 M0.8 8.8 L6 8.2" stroke="#7c7c14" stroke-width="0.85" fill="none"/><path d="M6.1 2.9 L7.6 3.2 L7.9 6.6 L6.3 6.6 Z" fill="#141414"/><path d="M5.8 7.3 L8.8 6.9 L8.6 9 L6.2 9.2 Z" fill="#1a1a1a"/><path d="M7.7 2.4 L9.5 7" stroke="#2a2a2a" stroke-width="0.7" fill="none"/><circle cx="7.5" cy="4.2" r="0.6" fill="#22b8cc"/><circle cx="7.7" cy="5.9" r="0.9" fill="#c8800e"/><circle cx="8.8" cy="6.3" r="0.55" fill="#7e7e18"/><circle cx="3.6" cy="8.2" r="0.55" fill="#e42222"/><circle cx="5.5" cy="2.4" r="0.55" fill="#7a1212"/></svg>
<div class="t" style="left:14.00px;top:235.82px;height:9.6px;line-height:9.6px;font-size:8.4px;color:#141414;transform:scale(0.731,1);transform-origin:0 50%;">ArmorBladesBoots</div>
<div class="t" style="left:163.80px;top:235.82px;height:9.6px;line-height:9.6px;font-size:8.4px;color:#141414;width:52.40px;text-align:center;transform:scale(0.731,1);transform-origin:50% 50%;">0004B288</div>
<div class="a" style="left:0;top:253.76px;width:217px;height:0.7px;background:#f0f0f0"></div>
<svg style="left:2.8px;top:244.87px" width="10" height="9.6" viewBox="0 0 10 9.6"><path d="M2.6 2.4 L7.6 2.2 L9.4 6.6 L8.4 8.8 L4.6 9.2 L0.6 8.8 L1 6.8 Z" fill="#b4b4ac"/><path d="M2.8 0.5 L7.4 0.1 L7.9 2 L2.6 2.4 Z" fill="#333"/><path d="M3.4 0.7 L6.4 0.4 L6.6 1.1 L3.4 1.4 Z" fill="#8e8e8e"/><path d="M3.5 3.2 L6 2.9 L6.1 6.2 L3.9 6.8 Z" fill="#f2f2f2"/><path d="M2.6 2.6 L0.9 7.2" stroke="#3c3c3c" stroke-width="0.85" fill="none"/><path d="M6.6 2.7 L1.2 8.4 M1 7 L3.2 9 M0.8 8.8 L6 8.2" stroke="#7c7c14" stroke-width="0.85" fill="none"/><path d="M6.1 2.9 L7.6 3.2 L7.9 6.6 L6.3 6.6 Z" fill="#141414"/><path d="M5.8 7.3 L8.8 6.9 L8.6 9 L6.2 9.2 Z" fill="#1a1a1a"/><path d="M7.7 2.4 L9.5 7" stroke="#2a2a2a" stroke-width="0.7" fill="none"/><circle cx="7.5" cy="4.2" r="0.6" fill="#22b8cc"/><circle cx="7.7" cy="5.9" r="0.9" fill="#c8800e"/><circle cx="8.8" cy="6.3" r="0.55" fill="#7e7e18"/><circle cx="3.6" cy="8.2" r="0.55" fill="#e42222"/><circle cx="5.5" cy="2.4" r="0.55" fill="#7a1212"/></svg>
<div class="t" style="left:14.00px;top:245.81px;height:9.6px;line-height:9.6px;font-size:8.4px;color:#141414;transform:scale(0.731,1);transform-origin:0 50%;">ArmorBladesCuirass</div>
<div class="t" style="left:163.80px;top:245.81px;height:9.6px;line-height:9.6px;font-size:8.4px;color:#141414;width:52.40px;text-align:center;transform:scale(0.731,1);transform-origin:50% 50%;">0004B28B</div>
<div class="a" style="left:0;top:263.75px;width:217px;height:0.7px;background:#f0f0f0"></div>
<svg style="left:2.8px;top:254.86px" width="10" height="9.6" viewBox="0 0 10 9.6"><path d="M2.6 2.4 L7.6 2.2 L9.4 6.6 L8.4 8.8 L4.6 9.2 L0.6 8.8 L1 6.8 Z" fill="#b4b4ac"/><path d="M2.8 0.5 L7.4 0.1 L7.9 2 L2.6 2.4 Z" fill="#333"/><path d="M3.4 0.7 L6.4 0.4 L6.6 1.1 L3.4 1.4 Z" fill="#8e8e8e"/><path d="M3.5 3.2 L6 2.9 L6.1 6.2 L3.9 6.8 Z" fill="#f2f2f2"/><path d="M2.6 2.6 L0.9 7.2" stroke="#3c3c3c" stroke-width="0.85" fill="none"/><path d="M6.6 2.7 L1.2 8.4 M1 7 L3.2 9 M0.8 8.8 L6 8.2" stroke="#7c7c14" stroke-width="0.85" fill="none"/><path d="M6.1 2.9 L7.6 3.2 L7.9 6.6 L6.3 6.6 Z" fill="#141414"/><path d="M5.8 7.3 L8.8 6.9 L8.6 9 L6.2 9.2 Z" fill="#1a1a1a"/><path d="M7.7 2.4 L9.5 7" stroke="#2a2a2a" stroke-width="0.7" fill="none"/><circle cx="7.5" cy="4.2" r="0.6" fill="#22b8cc"/><circle cx="7.7" cy="5.9" r="0.9" fill="#c8800e"/><circle cx="8.8" cy="6.3" r="0.55" fill="#7e7e18"/><circle cx="3.6" cy="8.2" r="0.55" fill="#e42222"/><circle cx="5.5" cy="2.4" r="0.55" fill="#7a1212"/></svg>
<div class="t" style="left:14.00px;top:255.81px;height:9.6px;line-height:9.6px;font-size:8.4px;color:#141414;transform:scale(0.731,1);transform-origin:0 50%;">ArmorBladesGauntlets</div>
<div class="t" style="left:163.80px;top:255.81px;height:9.6px;line-height:9.6px;font-size:8.4px;color:#141414;width:52.40px;text-align:center;transform:scale(0.731,1);transform-origin:50% 50%;">0004B28D</div>
<div class="a" style="left:0;top:273.74px;width:217px;height:0.7px;background:#f0f0f0"></div>
<svg style="left:2.8px;top:264.85px" width="10" height="9.6" viewBox="0 0 10 9.6"><path d="M2.6 2.4 L7.6 2.2 L9.4 6.6 L8.4 8.8 L4.6 9.2 L0.6 8.8 L1 6.8 Z" fill="#b4b4ac"/><path d="M2.8 0.5 L7.4 0.1 L7.9 2 L2.6 2.4 Z" fill="#333"/><path d="M3.4 0.7 L6.4 0.4 L6.6 1.1 L3.4 1.4 Z" fill="#8e8e8e"/><path d="M3.5 3.2 L6 2.9 L6.1 6.2 L3.9 6.8 Z" fill="#f2f2f2"/><path d="M2.6 2.6 L0.9 7.2" stroke="#3c3c3c" stroke-width="0.85" fill="none"/><path d="M6.6 2.7 L1.2 8.4 M1 7 L3.2 9 M0.8 8.8 L6 8.2" stroke="#7c7c14" stroke-width="0.85" fill="none"/><path d="M6.1 2.9 L7.6 3.2 L7.9 6.6 L6.3 6.6 Z" fill="#141414"/><path d="M5.8 7.3 L8.8 6.9 L8.6 9 L6.2 9.2 Z" fill="#1a1a1a"/><path d="M7.7 2.4 L9.5 7" stroke="#2a2a2a" stroke-width="0.7" fill="none"/><circle cx="7.5" cy="4.2" r="0.6" fill="#22b8cc"/><circle cx="7.7" cy="5.9" r="0.9" fill="#c8800e"/><circle cx="8.8" cy="6.3" r="0.55" fill="#7e7e18"/><circle cx="3.6" cy="8.2" r="0.55" fill="#e42222"/><circle cx="5.5" cy="2.4" r="0.55" fill="#7a1212"/></svg>
<div class="t" style="left:14.00px;top:265.80px;height:9.6px;line-height:9.6px;font-size:8.4px;color:#141414;transform:scale(0.731,1);transform-origin:0 50%;">ArmorBladesHelmet</div>
<div class="t" style="left:163.80px;top:265.80px;height:9.6px;line-height:9.6px;font-size:8.4px;color:#141414;width:52.40px;text-align:center;transform:scale(0.731,1);transform-origin:50% 50%;">0004B28F</div>
<div class="a" style="left:0;top:283.73px;width:217px;height:0.7px;background:#f0f0f0"></div>
<svg style="left:2.8px;top:274.84px" width="10" height="9.6" viewBox="0 0 10 9.6"><path d="M2.6 2.4 L7.6 2.2 L9.4 6.6 L8.4 8.8 L4.6 9.2 L0.6 8.8 L1 6.8 Z" fill="#b4b4ac"/><path d="M2.8 0.5 L7.4 0.1 L7.9 2 L2.6 2.4 Z" fill="#333"/><path d="M3.4 0.7 L6.4 0.4 L6.6 1.1 L3.4 1.4 Z" fill="#8e8e8e"/><path d="M3.5 3.2 L6 2.9 L6.1 6.2 L3.9 6.8 Z" fill="#f2f2f2"/><path d="M2.6 2.6 L0.9 7.2" stroke="#3c3c3c" stroke-width="0.85" fill="none"/><path d="M6.6 2.7 L1.2 8.4 M1 7 L3.2 9 M0.8 8.8 L6 8.2" stroke="#7c7c14" stroke-width="0.85" fill="none"/><path d="M6.1 2.9 L7.6 3.2 L7.9 6.6 L6.3 6.6 Z" fill="#141414"/><path d="M5.8 7.3 L8.8 6.9 L8.6 9 L6.2 9.2 Z" fill="#1a1a1a"/><path d="M7.7 2.4 L9.5 7" stroke="#2a2a2a" stroke-width="0.7" fill="none"/><circle cx="7.5" cy="4.2" r="0.6" fill="#22b8cc"/><circle cx="7.7" cy="5.9" r="0.9" fill="#c8800e"/><circle cx="8.8" cy="6.3" r="0.55" fill="#7e7e18"/><circle cx="3.6" cy="8.2" r="0.55" fill="#e42222"/><circle cx="5.5" cy="2.4" r="0.55" fill="#7a1212"/></svg>
<div class="t" style="left:14.00px;top:275.79px;height:9.6px;line-height:9.6px;font-size:8.4px;color:#141414;transform:scale(0.731,1);transform-origin:0 50%;">ArmorBladesShield</div>
<div class="t" style="left:163.80px;top:275.79px;height:9.6px;line-height:9.6px;font-size:8.4px;color:#141414;width:52.40px;text-align:center;transform:scale(0.731,1);transform-origin:50% 50%;">0004F912</div>
<div class="a" style="left:0;top:293.72px;width:217px;height:0.7px;background:#f0f0f0"></div>
<svg style="left:2.8px;top:284.83px" width="10" height="9.6" viewBox="0 0 10 9.6"><path d="M2.6 2.4 L7.6 2.2 L9.4 6.6 L8.4 8.8 L4.6 9.2 L0.6 8.8 L1 6.8 Z" fill="#b4b4ac"/><path d="M2.8 0.5 L7.4 0.1 L7.9 2 L2.6 2.4 Z" fill="#333"/><path d="M3.4 0.7 L6.4 0.4 L6.6 1.1 L3.4 1.4 Z" fill="#8e8e8e"/><path d="M3.5 3.2 L6 2.9 L6.1 6.2 L3.9 6.8 Z" fill="#f2f2f2"/><path d="M2.6 2.6 L0.9 7.2" stroke="#3c3c3c" stroke-width="0.85" fill="none"/><path d="M6.6 2.7 L1.2 8.4 M1 7 L3.2 9 M0.8 8.8 L6 8.2" stroke="#7c7c14" stroke-width="0.85" fill="none"/><path d="M6.1 2.9 L7.6 3.2 L7.9 6.6 L6.3 6.6 Z" fill="#141414"/><path d="M5.8 7.3 L8.8 6.9 L8.6 9 L6.2 9.2 Z" fill="#1a1a1a"/><path d="M7.7 2.4 L9.5 7" stroke="#2a2a2a" stroke-width="0.7" fill="none"/><circle cx="7.5" cy="4.2" r="0.6" fill="#22b8cc"/><circle cx="7.7" cy="5.9" r="0.9" fill="#c8800e"/><circle cx="8.8" cy="6.3" r="0.55" fill="#7e7e18"/><circle cx="3.6" cy="8.2" r="0.55" fill="#e42222"/><circle cx="5.5" cy="2.4" r="0.55" fill="#7a1212"/></svg>
<div class="t" style="left:14.00px;top:285.78px;height:9.6px;line-height:9.6px;font-size:8.4px;color:#141414;transform:scale(0.731,1);transform-origin:0 50%;">ArmorBoneCrown</div>
<div class="t" style="left:163.80px;top:285.78px;height:9.6px;line-height:9.6px;font-size:8.4px;color:#141414;width:52.40px;text-align:center;transform:scale(0.731,1);transform-origin:50% 50%;">000DA750</div>
<div class="a" style="left:0;top:303.71px;width:217px;height:0.7px;background:#f0f0f0"></div>
<svg style="left:2.8px;top:294.82px" width="10" height="9.6" viewBox="0 0 10 9.6"><path d="M2.6 2.4 L7.6 2.2 L9.4 6.6 L8.4 8.8 L4.6 9.2 L0.6 8.8 L1 6.8 Z" fill="#b4b4ac"/><path d="M2.8 0.5 L7.4 0.1 L7.9 2 L2.6 2.4 Z" fill="#333"/><path d="M3.4 0.7 L6.4 0.4 L6.6 1.1 L3.4 1.4 Z" fill="#8e8e8e"/><path d="M3.5 3.2 L6 2.9 L6.1 6.2 L3.9 6.8 Z" fill="#f2f2f2"/><path d="M2.6 2.6 L0.9 7.2" stroke="#3c3c3c" stroke-width="0.85" fill="none"/><path d="M6.6 2.7 L1.2 8.4 M1 7 L3.2 9 M0.8 8.8 L6 8.2" stroke="#7c7c14" stroke-width="0.85" fill="none"/><path d="M6.1 2.9 L7.6 3.2 L7.9 6.6 L6.3 6.6 Z" fill="#141414"/><path d="M5.8 7.3 L8.8 6.9 L8.6 9 L6.2 9.2 Z" fill="#1a1a1a"/><path d="M7.7 2.4 L9.5 7" stroke="#2a2a2a" stroke-width="0.7" fill="none"/><circle cx="7.5" cy="4.2" r="0.6" fill="#22b8cc"/><circle cx="7.7" cy="5.9" r="0.9" fill="#c8800e"/><circle cx="8.8" cy="6.3" r="0.55" fill="#7e7e18"/><circle cx="3.6" cy="8.2" r="0.55" fill="#e42222"/><circle cx="5.5" cy="2.4" r="0.55" fill="#7a1212"/></svg>
<div class="t" style="left:14.00px;top:295.77px;height:9.6px;line-height:9.6px;font-size:8.4px;color:#141414;transform:scale(0.731,1);transform-origin:0 50%;">ArmorBriarHeart</div>
<div class="t" style="left:163.80px;top:295.77px;height:9.6px;line-height:9.6px;font-size:8.4px;color:#141414;width:52.40px;text-align:center;transform:scale(0.731,1);transform-origin:50% 50%;">0005D008</div>
<div class="a" style="left:0;top:313.70px;width:217px;height:0.7px;background:#f0f0f0"></div>
<svg style="left:2.8px;top:304.81px" width="10" height="9.6" viewBox="0 0 10 9.6"><path d="M2.6 2.4 L7.6 2.2 L9.4 6.6 L8.4 8.8 L4.6 9.2 L0.6 8.8 L1 6.8 Z" fill="#b4b4ac"/><path d="M2.8 0.5 L7.4 0.1 L7.9 2 L2.6 2.4 Z" fill="#333"/><path d="M3.4 0.7 L6.4 0.4 L6.6 1.1 L3.4 1.4 Z" fill="#8e8e8e"/><path d="M3.5 3.2 L6 2.9 L6.1 6.2 L3.9 6.8 Z" fill="#f2f2f2"/><path d="M2.6 2.6 L0.9 7.2" stroke="#3c3c3c" stroke-width="0.85" fill="none"/><path d="M6.6 2.7 L1.2 8.4 M1 7 L3.2 9 M0.8 8.8 L6 8.2" stroke="#7c7c14" stroke-width="0.85" fill="none"/><path d="M6.1 2.9 L7.6 3.2 L7.9 6.6 L6.3 6.6 Z" fill="#141414"/><path d="M5.8 7.3 L8.8 6.9 L8.6 9 L6.2 9.2 Z" fill="#1a1a1a"/><path d="M7.7 2.4 L9.5 7" stroke="#2a2a2a" stroke-width="0.7" fill="none"/><circle cx="7.5" cy="4.2" r="0.6" fill="#22b8cc"/><circle cx="7.7" cy="5.9" r="0.9" fill="#c8800e"/><circle cx="8.8" cy="6.3" r="0.55" fill="#7e7e18"/><circle cx="3.6" cy="8.2" r="0.55" fill="#e42222"/><circle cx="5.5" cy="2.4" r="0.55" fill="#7a1212"/></svg>
<div class="t" style="left:14.00px;top:305.75px;height:9.6px;line-height:9.6px;font-size:8.4px;color:#141414;transform:scale(0.731,1);transform-origin:0 50%;">ArmorBriarHeartEmpty</div>
<div class="t" style="left:163.80px;top:305.75px;height:9.6px;line-height:9.6px;font-size:8.4px;color:#141414;width:52.40px;text-align:center;transform:scale(0.731,1);transform-origin:50% 50%;">0005D009</div>
<div class="a" style="left:0;top:323.69px;width:217px;height:0.7px;background:#f0f0f0"></div>
<svg style="left:2.8px;top:314.80px" width="10" height="9.6" viewBox="0 0 10 9.6"><path d="M2.6 2.4 L7.6 2.2 L9.4 6.6 L8.4 8.8 L4.6 9.2 L0.6 8.8 L1 6.8 Z" fill="#b4b4ac"/><path d="M2.8 0.5 L7.4 0.1 L7.9 2 L2.6 2.4 Z" fill="#333"/><path d="M3.4 0.7 L6.4 0.4 L6.6 1.1 L3.4 1.4 Z" fill="#8e8e8e"/><path d="M3.5 3.2 L6 2.9 L6.1 6.2 L3.9 6.8 Z" fill="#f2f2f2"/><path d="M2.6 2.6 L0.9 7.2" stroke="#3c3c3c" stroke-width="0.85" fill="none"/><path d="M6.6 2.7 L1.2 8.4 M1 7 L3.2 9 M0.8 8.8 L6 8.2" stroke="#7c7c14" stroke-width="0.85" fill="none"/><path d="M6.1 2.9 L7.6 3.2 L7.9 6.6 L6.3 6.6 Z" fill="#141414"/><path d="M5.8 7.3 L8.8 6.9 L8.6 9 L6.2 9.2 Z" fill="#1a1a1a"/><path d="M7.7 2.4 L9.5 7" stroke="#2a2a2a" stroke-width="0.7" fill="none"/><circle cx="7.5" cy="4.2" r="0.6" fill="#22b8cc"/><circle cx="7.7" cy="5.9" r="0.9" fill="#c8800e"/><circle cx="8.8" cy="6.3" r="0.55" fill="#7e7e18"/><circle cx="3.6" cy="8.2" r="0.55" fill="#e42222"/><circle cx="5.5" cy="2.4" r="0.55" fill="#7a1212"/></svg>
<div class="t" style="left:14.00px;top:315.75px;height:9.6px;line-height:9.6px;font-size:8.4px;color:#141414;transform:scale(0.731,1);transform-origin:0 50%;">ArmorChaurusSpitSkin</div>
<div class="t" style="left:163.80px;top:315.75px;height:9.6px;line-height:9.6px;font-size:8.4px;color:#141414;width:52.40px;text-align:center;transform:scale(0.731,1);transform-origin:50% 50%;">000C5A9D</div>
<div class="a" style="left:0;top:333.68px;width:217px;height:0.7px;background:#f0f0f0"></div>
<svg style="left:2.8px;top:324.79px" width="10" height="9.6" viewBox="0 0 10 9.6"><path d="M2.6 2.4 L7.6 2.2 L9.4 6.6 L8.4 8.8 L4.6 9.2 L0.6 8.8 L1 6.8 Z" fill="#b4b4ac"/><path d="M2.8 0.5 L7.4 0.1 L7.9 2 L2.6 2.4 Z" fill="#333"/><path d="M3.4 0.7 L6.4 0.4 L6.6 1.1 L3.4 1.4 Z" fill="#8e8e8e"/><path d="M3.5 3.2 L6 2.9 L6.1 6.2 L3.9 6.8 Z" fill="#f2f2f2"/><path d="M2.6 2.6 L0.9 7.2" stroke="#3c3c3c" stroke-width="0.85" fill="none"/><path d="M6.6 2.7 L1.2 8.4 M1 7 L3.2 9 M0.8 8.8 L6 8.2" stroke="#7c7c14" stroke-width="0.85" fill="none"/><path d="M6.1 2.9 L7.6 3.2 L7.9 6.6 L6.3 6.6 Z" fill="#141414"/><path d="M5.8 7.3 L8.8 6.9 L8.6 9 L6.2 9.2 Z" fill="#1a1a1a"/><path d="M7.7 2.4 L9.5 7" stroke="#2a2a2a" stroke-width="0.7" fill="none"/><circle cx="7.5" cy="4.2" r="0.6" fill="#22b8cc"/><circle cx="7.7" cy="5.9" r="0.9" fill="#c8800e"/><circle cx="8.8" cy="6.3" r="0.55" fill="#7e7e18"/><circle cx="3.6" cy="8.2" r="0.55" fill="#e42222"/><circle cx="5.5" cy="2.4" r="0.55" fill="#7a1212"/></svg>
<div class="t" style="left:14.00px;top:325.74px;height:9.6px;line-height:9.6px;font-size:8.4px;color:#141414;transform:scale(0.731,1);transform-origin:0 50%;">ArmorCompanionsBoots</div>
<div class="t" style="left:163.80px;top:325.74px;height:9.6px;line-height:9.6px;font-size:8.4px;color:#141414;width:52.40px;text-align:center;transform:scale(0.731,1);transform-origin:50% 50%;">000CEE7C</div>
<div class="a" style="left:0;top:343.67px;width:217px;height:0.7px;background:#f0f0f0"></div>
<svg style="left:2.8px;top:334.78px" width="10" height="9.6" viewBox="0 0 10 9.6"><path d="M2.6 2.4 L7.6 2.2 L9.4 6.6 L8.4 8.8 L4.6 9.2 L0.6 8.8 L1 6.8 Z" fill="#b4b4ac"/><path d="M2.8 0.5 L7.4 0.1 L7.9 2 L2.6 2.4 Z" fill="#333"/><path d="M3.4 0.7 L6.4 0.4 L6.6 1.1 L3.4 1.4 Z" fill="#8e8e8e"/><path d="M3.5 3.2 L6 2.9 L6.1 6.2 L3.9 6.8 Z" fill="#f2f2f2"/><path d="M2.6 2.6 L0.9 7.2" stroke="#3c3c3c" stroke-width="0.85" fill="none"/><path d="M6.6 2.7 L1.2 8.4 M1 7 L3.2 9 M0.8 8.8 L6 8.2" stroke="#7c7c14" stroke-width="0.85" fill="none"/><path d="M6.1 2.9 L7.6 3.2 L7.9 6.6 L6.3 6.6 Z" fill="#141414"/><path d="M5.8 7.3 L8.8 6.9 L8.6 9 L6.2 9.2 Z" fill="#1a1a1a"/><path d="M7.7 2.4 L9.5 7" stroke="#2a2a2a" stroke-width="0.7" fill="none"/><circle cx="7.5" cy="4.2" r="0.6" fill="#22b8cc"/><circle cx="7.7" cy="5.9" r="0.9" fill="#c8800e"/><circle cx="8.8" cy="6.3" r="0.55" fill="#7e7e18"/><circle cx="3.6" cy="8.2" r="0.55" fill="#e42222"/><circle cx="5.5" cy="2.4" r="0.55" fill="#7a1212"/></svg>
<div class="t" style="left:14.00px;top:335.73px;height:9.6px;line-height:9.6px;font-size:8.4px;color:#141414;transform:scale(0.731,1);transform-origin:0 50%;">ArmorCompanionsCuirass</div>
<div class="t" style="left:163.80px;top:335.73px;height:9.6px;line-height:9.6px;font-size:8.4px;color:#141414;width:52.40px;text-align:center;transform:scale(0.731,1);transform-origin:50% 50%;">000CAE15</div>
<div class="a" style="left:0;top:353.66px;width:217px;height:0.7px;background:#f0f0f0"></div>
<svg style="left:2.8px;top:344.77px" width="10" height="9.6" viewBox="0 0 10 9.6"><path d="M2.6 2.4 L7.6 2.2 L9.4 6.6 L8.4 8.8 L4.6 9.2 L0.6 8.8 L1 6.8 Z" fill="#b4b4ac"/><path d="M2.8 0.5 L7.4 0.1 L7.9 2 L2.6 2.4 Z" fill="#333"/><path d="M3.4 0.7 L6.4 0.4 L6.6 1.1 L3.4 1.4 Z" fill="#8e8e8e"/><path d="M3.5 3.2 L6 2.9 L6.1 6.2 L3.9 6.8 Z" fill="#f2f2f2"/><path d="M2.6 2.6 L0.9 7.2" stroke="#3c3c3c" stroke-width="0.85" fill="none"/><path d="M6.6 2.7 L1.2 8.4 M1 7 L3.2 9 M0.8 8.8 L6 8.2" stroke="#7c7c14" stroke-width="0.85" fill="none"/><path d="M6.1 2.9 L7.6 3.2 L7.9 6.6 L6.3 6.6 Z" fill="#141414"/><path d="M5.8 7.3 L8.8 6.9 L8.6 9 L6.2 9.2 Z" fill="#1a1a1a"/><path d="M7.7 2.4 L9.5 7" stroke="#2a2a2a" stroke-width="0.7" fill="none"/><circle cx="7.5" cy="4.2" r="0.6" fill="#22b8cc"/><circle cx="7.7" cy="5.9" r="0.9" fill="#c8800e"/><circle cx="8.8" cy="6.3" r="0.55" fill="#7e7e18"/><circle cx="3.6" cy="8.2" r="0.55" fill="#e42222"/><circle cx="5.5" cy="2.4" r="0.55" fill="#7a1212"/></svg>
<div class="t" style="left:14.00px;top:345.72px;height:9.6px;line-height:9.6px;font-size:8.4px;color:#141414;transform:scale(0.731,1);transform-origin:0 50%;">ArmorCompanionsGauntlets</div>
<div class="t" style="left:163.80px;top:345.72px;height:9.6px;line-height:9.6px;font-size:8.4px;color:#141414;width:52.40px;text-align:center;transform:scale(0.731,1);transform-origin:50% 50%;">000CEE7E</div>
<div class="a" style="left:0;top:363.65px;width:217px;height:0.7px;background:#f0f0f0"></div>
<svg style="left:2.8px;top:354.76px" width="10" height="9.6" viewBox="0 0 10 9.6"><path d="M2.6 2.4 L7.6 2.2 L9.4 6.6 L8.4 8.8 L4.6 9.2 L0.6 8.8 L1 6.8 Z" fill="#b4b4ac"/><path d="M2.8 0.5 L7.4 0.1 L7.9 2 L2.6 2.4 Z" fill="#333"/><path d="M3.4 0.7 L6.4 0.4 L6.6 1.1 L3.4 1.4 Z" fill="#8e8e8e"/><path d="M3.5 3.2 L6 2.9 L6.1 6.2 L3.9 6.8 Z" fill="#f2f2f2"/><path d="M2.6 2.6 L0.9 7.2" stroke="#3c3c3c" stroke-width="0.85" fill="none"/><path d="M6.6 2.7 L1.2 8.4 M1 7 L3.2 9 M0.8 8.8 L6 8.2" stroke="#7c7c14" stroke-width="0.85" fill="none"/><path d="M6.1 2.9 L7.6 3.2 L7.9 6.6 L6.3 6.6 Z" fill="#141414"/><path d="M5.8 7.3 L8.8 6.9 L8.6 9 L6.2 9.2 Z" fill="#1a1a1a"/><path d="M7.7 2.4 L9.5 7" stroke="#2a2a2a" stroke-width="0.7" fill="none"/><circle cx="7.5" cy="4.2" r="0.6" fill="#22b8cc"/><circle cx="7.7" cy="5.9" r="0.9" fill="#c8800e"/><circle cx="8.8" cy="6.3" r="0.55" fill="#7e7e18"/><circle cx="3.6" cy="8.2" r="0.55" fill="#e42222"/><circle cx="5.5" cy="2.4" r="0.55" fill="#7a1212"/></svg>
<div class="t" style="left:14.00px;top:355.71px;height:9.6px;line-height:9.6px;font-size:8.4px;color:#141414;transform:scale(0.731,1);transform-origin:0 50%;">ArmorCompanionsHelmet</div>
<div class="t" style="left:163.80px;top:355.71px;height:9.6px;line-height:9.6px;font-size:8.4px;color:#141414;width:52.40px;text-align:center;transform:scale(0.731,1);transform-origin:50% 50%;">0004C3D0</div>
<div class="a" style="left:0;top:373.64px;width:217px;height:0.7px;background:#f0f0f0"></div>
<svg style="left:2.8px;top:364.75px" width="10" height="9.6" viewBox="0 0 10 9.6"><path d="M2.6 2.4 L7.6 2.2 L9.4 6.6 L8.4 8.8 L4.6 9.2 L0.6 8.8 L1 6.8 Z" fill="#b4b4ac"/><path d="M2.8 0.5 L7.4 0.1 L7.9 2 L2.6 2.4 Z" fill="#333"/><path d="M3.4 0.7 L6.4 0.4 L6.6 1.1 L3.4 1.4 Z" fill="#8e8e8e"/><path d="M3.5 3.2 L6 2.9 L6.1 6.2 L3.9 6.8 Z" fill="#f2f2f2"/><path d="M2.6 2.6 L0.9 7.2" stroke="#3c3c3c" stroke-width="0.85" fill="none"/><path d="M6.6 2.7 L1.2 8.4 M1 7 L3.2 9 M0.8 8.8 L6 8.2" stroke="#7c7c14" stroke-width="0.85" fill="none"/><path d="M6.1 2.9 L7.6 3.2 L7.9 6.6 L6.3 6.6 Z" fill="#141414"/><path d="M5.8 7.3 L8.8 6.9 L8.6 9 L6.2 9.2 Z" fill="#1a1a1a"/><path d="M7.7 2.4 L9.5 7" stroke="#2a2a2a" stroke-width="0.7" fill="none"/><circle cx="7.5" cy="4.2" r="0.6" fill="#22b8cc"/><circle cx="7.7" cy="5.9" r="0.9" fill="#c8800e"/><circle cx="8.8" cy="6.3" r="0.55" fill="#7e7e18"/><circle cx="3.6" cy="8.2" r="0.55" fill="#e42222"/><circle cx="5.5" cy="2.4" r="0.55" fill="#7a1212"/></svg>
<div class="t" style="left:14.00px;top:365.70px;height:9.6px;line-height:9.6px;font-size:8.4px;color:#141414;transform:scale(0.731,1);transform-origin:0 50%;">ArmorDaedricBoots</div>
<div class="t" style="left:163.80px;top:365.70px;height:9.6px;line-height:9.6px;font-size:8.4px;color:#141414;width:52.40px;text-align:center;transform:scale(0.731,1);transform-origin:50% 50%;">0001396A</div>
<div class="a" style="left:0;top:383.63px;width:217px;height:0.7px;background:#f0f0f0"></div>
<svg style="left:2.8px;top:374.74px" width="10" height="9.6" viewBox="0 0 10 9.6"><path d="M2.6 2.4 L7.6 2.2 L9.4 6.6 L8.4 8.8 L4.6 9.2 L0.6 8.8 L1 6.8 Z" fill="#b4b4ac"/><path d="M2.8 0.5 L7.4 0.1 L7.9 2 L2.6 2.4 Z" fill="#333"/><path d="M3.4 0.7 L6.4 0.4 L6.6 1.1 L3.4 1.4 Z" fill="#8e8e8e"/><path d="M3.5 3.2 L6 2.9 L6.1 6.2 L3.9 6.8 Z" fill="#f2f2f2"/><path d="M2.6 2.6 L0.9 7.2" stroke="#3c3c3c" stroke-width="0.85" fill="none"/><path d="M6.6 2.7 L1.2 8.4 M1 7 L3.2 9 M0.8 8.8 L6 8.2" stroke="#7c7c14" stroke-width="0.85" fill="none"/><path d="M6.1 2.9 L7.6 3.2 L7.9 6.6 L6.3 6.6 Z" fill="#141414"/><path d="M5.8 7.3 L8.8 6.9 L8.6 9 L6.2 9.2 Z" fill="#1a1a1a"/><path d="M7.7 2.4 L9.5 7" stroke="#2a2a2a" stroke-width="0.7" fill="none"/><circle cx="7.5" cy="4.2" r="0.6" fill="#22b8cc"/><circle cx="7.7" cy="5.9" r="0.9" fill="#c8800e"/><circle cx="8.8" cy="6.3" r="0.55" fill="#7e7e18"/><circle cx="3.6" cy="8.2" r="0.55" fill="#e42222"/><circle cx="5.5" cy="2.4" r="0.55" fill="#7a1212"/></svg>
<div class="t" style="left:14.00px;top:375.69px;height:9.6px;line-height:9.6px;font-size:8.4px;color:#141414;transform:scale(0.731,1);transform-origin:0 50%;">ArmorDaedricCuirass</div>
<div class="t" style="left:163.80px;top:375.69px;height:9.6px;line-height:9.6px;font-size:8.4px;color:#141414;width:52.40px;text-align:center;transform:scale(0.731,1);transform-origin:50% 50%;">0001396B</div>
<div class="a" style="left:0;top:393.62px;width:217px;height:0.7px;background:#f0f0f0"></div>
<svg style="left:2.8px;top:384.73px" width="10" height="9.6" viewBox="0 0 10 9.6"><path d="M2.6 2.4 L7.6 2.2 L9.4 6.6 L8.4 8.8 L4.6 9.2 L0.6 8.8 L1 6.8 Z" fill="#b4b4ac"/><path d="M2.8 0.5 L7.4 0.1 L7.9 2 L2.6 2.4 Z" fill="#333"/><path d="M3.4 0.7 L6.4 0.4 L6.6 1.1 L3.4 1.4 Z" fill="#8e8e8e"/><path d="M3.5 3.2 L6 2.9 L6.1 6.2 L3.9 6.8 Z" fill="#f2f2f2"/><path d="M2.6 2.6 L0.9 7.2" stroke="#3c3c3c" stroke-width="0.85" fill="none"/><path d="M6.6 2.7 L1.2 8.4 M1 7 L3.2 9 M0.8 8.8 L6 8.2" stroke="#7c7c14" stroke-width="0.85" fill="none"/><path d="M6.1 2.9 L7.6 3.2 L7.9 6.6 L6.3 6.6 Z" fill="#141414"/><path d="M5.8 7.3 L8.8 6.9 L8.6 9 L6.2 9.2 Z" fill="#1a1a1a"/><path d="M7.7 2.4 L9.5 7" stroke="#2a2a2a" stroke-width="0.7" fill="none"/><circle cx="7.5" cy="4.2" r="0.6" fill="#22b8cc"/><circle cx="7.7" cy="5.9" r="0.9" fill="#c8800e"/><circle cx="8.8" cy="6.3" r="0.55" fill="#7e7e18"/><circle cx="3.6" cy="8.2" r="0.55" fill="#e42222"/><circle cx="5.5" cy="2.4" r="0.55" fill="#7a1212"/></svg>
<div class="t" style="left:14.00px;top:385.68px;height:9.6px;line-height:9.6px;font-size:8.4px;color:#141414;transform:scale(0.731,1);transform-origin:0 50%;">ArmorDaedricGauntlets</div>
<div class="t" style="left:163.80px;top:385.68px;height:9.6px;line-height:9.6px;font-size:8.4px;color:#141414;width:52.40px;text-align:center;transform:scale(0.731,1);transform-origin:50% 50%;">0001396C</div>
</div>
<div class="a" style="left:312px;top:65px;width:10.0px;height:391.0px;background:#f0f0f0"></div>
<div class="a" style="left:313px;top:76px;width:8px;height:10px;background:#cdcdcd"></div>
<svg style="left:312px;top:64px" width="10" height="396" viewBox="0 0 10 396"><g stroke="#3a3a3a" stroke-width="1.15" fill="none"><path d="M3 8.6 L5.2 6.4 L7.4 8.6"/><path d="M3 385.2 L5.2 387.4 L7.4 385.2"/></g></svg>
<div class="a" style="left:95px;top:456px;width:227.0px;height:8px;background:#f0f0f0"></div>
<div class="a" style="left:106px;top:456px;width:54px;height:8px;background:#cdcdcd"></div>
<svg style="left:94px;top:455px" width="230" height="10" viewBox="0 0 230 10"><g stroke="#3a3a3a" stroke-width="1.15" fill="none"><path d="M7 2.6 L4.8 4.7 L7 6.8"/><path d="M212 2.6 L214.2 4.7 L212 6.8"/></g><g fill="#b5b5b5"><rect x="224.5" y="4" width="0.9" height="0.9"/><rect x="224.5" y="5.8" width="0.9" height="0.9"/><rect x="224.5" y="7.6" width="0.9" height="0.9"/><rect x="222.7" y="5.8" width="0.9" height="0.9"/><rect x="222.7" y="7.6" width="0.9" height="0.9"/><rect x="220.9" y="7.6" width="0.9" height="0.9"/></g></svg>
<div class="a" style="left:233px;top:133px;width:82px;height:10px;background:#fff;border:0.7px solid #909090;box-shadow:1px 1px 1.5px rgba(0,0,0,.35)"></div>
<div class="t" style="left:236.80px;top:133.30px;height:10px;line-height:10px;font-size:8.4px;color:#585858;transform:scale(0.742,1);transform-origin:0 50%;">'0HestiaPanty' (020012D0)</div>
<svg style="left:88px;top:114px" width="76" height="24" viewBox="88 114 76 24"><path d="M97.2 120.3 C105 119.1 120 119 129 119.1 C138 119.2 147 119.5 150.5 121.1 C154 122.7 156.5 124.6 156.8 127 C157 129.4 157.2 131 155 131.6 C150 132.3 140 132.1 130 131.9 C120 131.7 110 131.1 104 129.6 C99 128.4 95 126.6 94 124 C93.3 121.9 95 120.6 98.6 120" fill="none" stroke="#ec1c26" stroke-width="1.5" stroke-linecap="round"/></svg>
<div class="a" style="left:0;top:465.4px;width:640px;height:4.3px;background:linear-gradient(#707070 0%,#7a7a7a 40%,#a6a6a6 68%,#d8d8d8 92%,#e8e8e8)"></div><div class="a" style="left:325.8px;top:465.3px;width:311px;height:4.4px;background:linear-gradient(#f0f0f0 0%,#e8e8e8 12%,#bababa 38%,#9a9a9a 66%,#8e8e8e 100%)"></div>
</div></body></html>
